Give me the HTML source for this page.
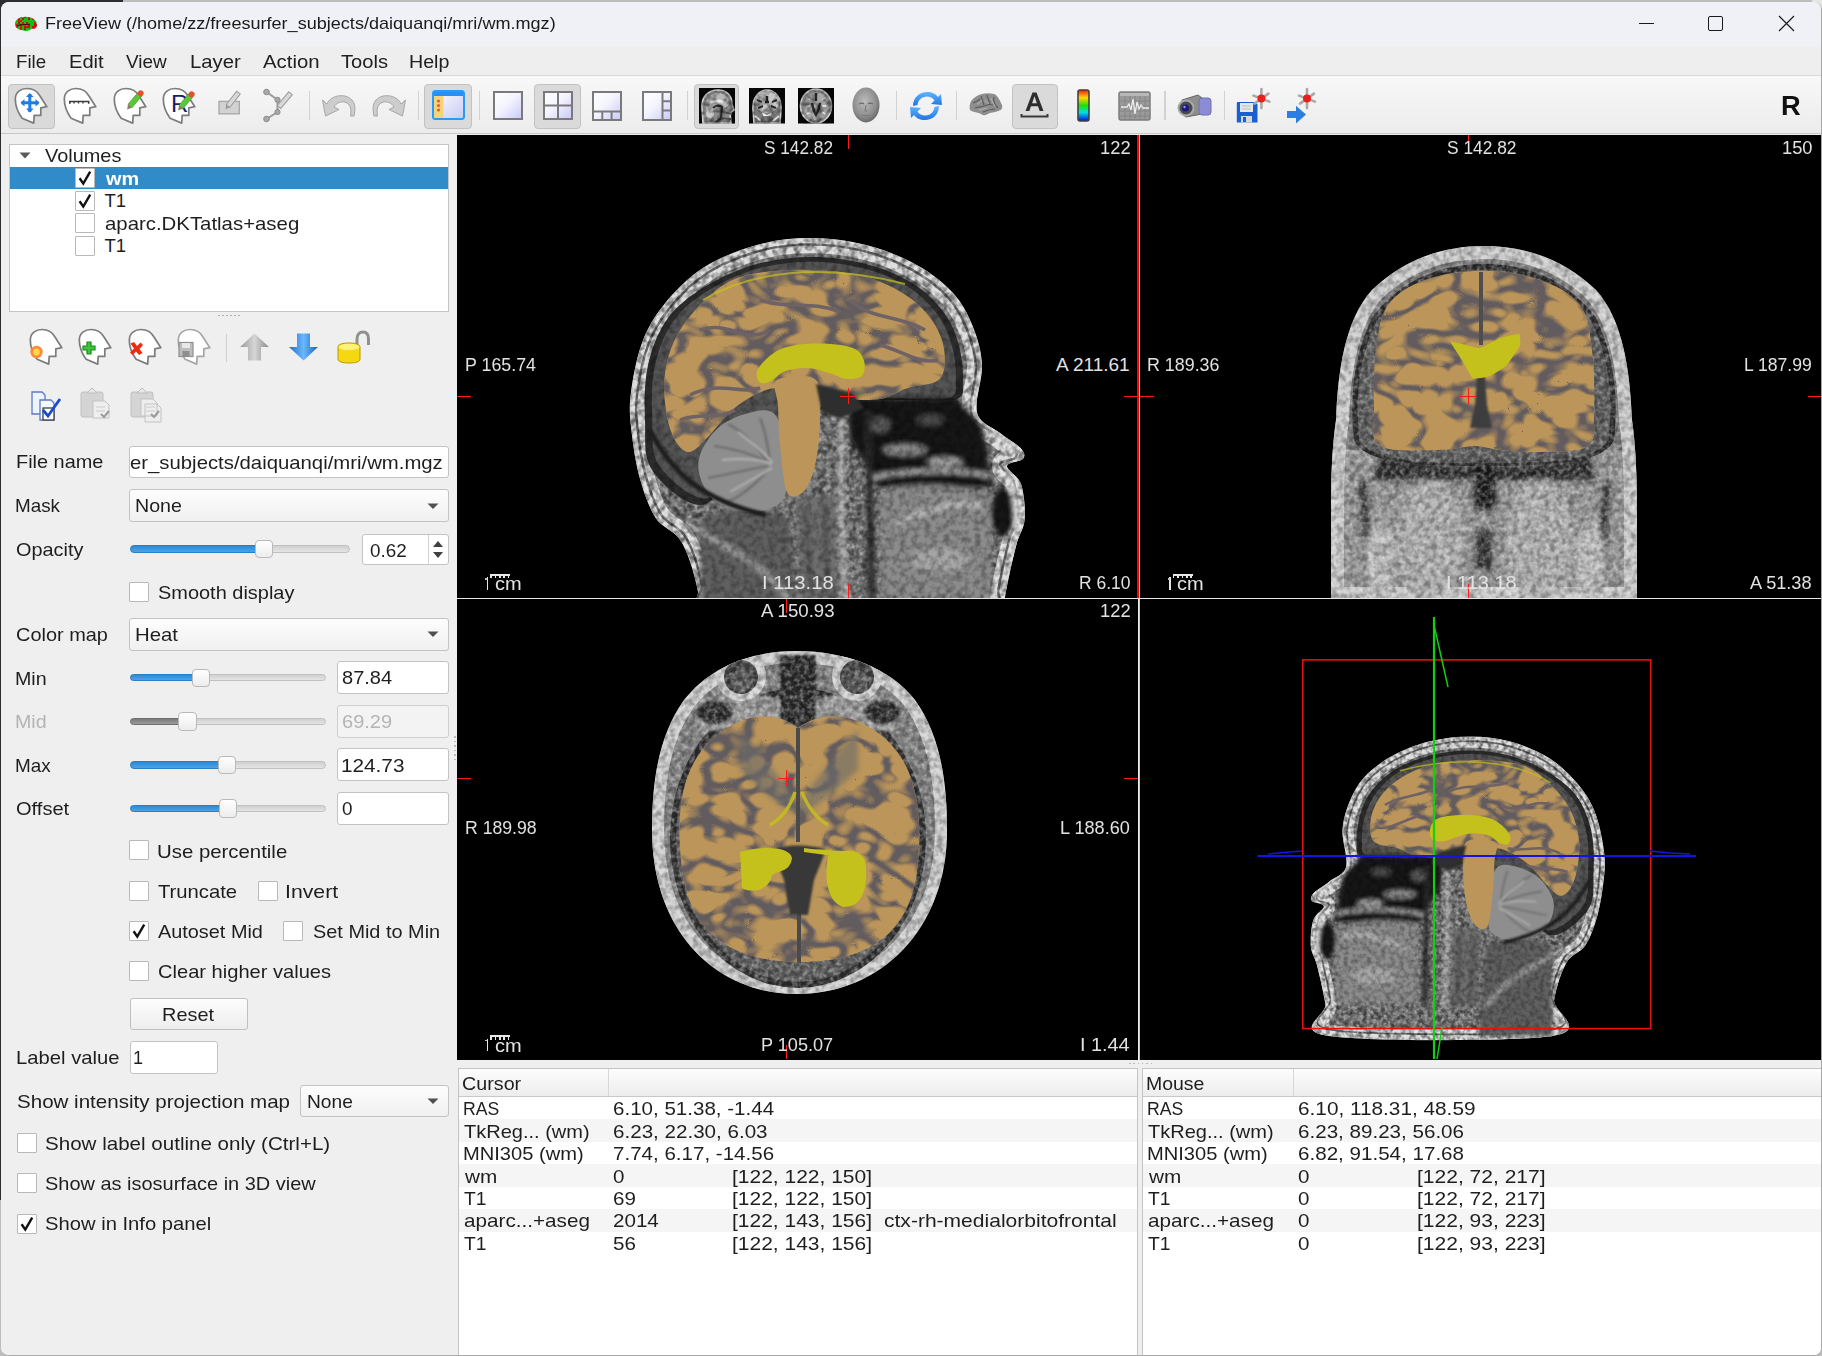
<!DOCTYPE html>
<html><head><meta charset="utf-8"><title>FreeView</title>
<style>
html,body{margin:0;padding:0;}
body{width:1822px;height:1356px;overflow:hidden;position:relative;background:#bdbdbd;font-family:"Liberation Sans",sans-serif;}
.r{position:absolute;box-sizing:border-box;}
.t{position:absolute;white-space:pre;line-height:1;transform-origin:0 0;font-family:"Liberation Sans",sans-serif;}
svg{position:absolute;overflow:visible;}
</style></head><body>
<div class="r" style="left:0px;top:0px;width:123px;height:2px;background:#2b2d31"></div><div class="r" style="left:0px;top:0px;width:2px;height:1200px;background:#2b2d31"></div><div class="r" style="left:0px;top:0px;width:12px;height:12px;background:#2b2d31"></div><div class="r" style="left:1812px;top:0px;width:10px;height:12px;background:#e6e6e6"></div><div class="r" style="left:1px;top:2px;width:1821px;height:1354px;border-radius:8px;background:#efefef;border-right:1px solid #a9a9a9;border-bottom:1px solid #a9a9a9;overflow:hidden"><div style="position:absolute;left:-1px;top:-2px;width:1822px;height:1356px"><div class="r" style="left:0px;top:0px;width:1822px;height:47px;background:#eff1f6"></div><div class="r" style="left:1639px;top:23px;width:15px;height:1px;background:#1a1a1a"></div><div class="r" style="left:1708px;top:16px;width:15px;height:15px;border:1.2px solid #1a1a1a;border-radius:2px"></div><svg style="left:1778px;top:15px" width="17" height="17" viewBox="0 0 17 17"><path d="M1 1 L16 16 M16 1 L1 16" stroke="#1a1a1a" stroke-width="1.2"/></svg><div class="r" style="left:0px;top:47px;width:1822px;height:29px;background:#eeeeee"></div><div class="r" style="left:0px;top:75px;width:1822px;height:1px;background:#d9d9d9"></div><div class="r" style="left:0px;top:76px;width:1822px;height:57px;background:linear-gradient(#f8f8f8,#ececec)"></div><div class="r" style="left:0px;top:133px;width:1822px;height:1px;background:#c8c8c8"></div><div class="r" style="left:7.5px;top:83.6px;width:47.2px;height:45px;background:#dadada;border:1px solid #c2c2c2;border-radius:4px"></div><div class="r" style="left:424.4px;top:83.6px;width:47.200000000000045px;height:45px;background:#dadada;border:1px solid #c2c2c2;border-radius:4px"></div><div class="r" style="left:534.1px;top:83.6px;width:47.10000000000002px;height:45px;background:#dadada;border:1px solid #c2c2c2;border-radius:4px"></div><div class="r" style="left:693.9px;top:83.6px;width:45.200000000000045px;height:45px;background:#dadada;border:1px solid #c2c2c2;border-radius:4px"></div><div class="r" style="left:1011.5px;top:83.6px;width:46.700000000000045px;height:45px;background:#dadada;border:1px solid #c2c2c2;border-radius:4px"></div><div class="r" style="left:309.1px;top:91px;width:1.2px;height:29px;background:#d2d2d2"></div><div class="r" style="left:418.3px;top:91px;width:1.2px;height:29px;background:#d2d2d2"></div><div class="r" style="left:478.8px;top:91px;width:1.2px;height:29px;background:#d2d2d2"></div><div class="r" style="left:687.0px;top:91px;width:1.2px;height:29px;background:#d2d2d2"></div><div class="r" style="left:895.7px;top:91px;width:1.2px;height:29px;background:#d2d2d2"></div><div class="r" style="left:955.7px;top:91px;width:1.2px;height:29px;background:#d2d2d2"></div><div class="r" style="left:1164.4px;top:91px;width:1.2px;height:29px;background:#d2d2d2"></div><div class="r" style="left:1224.1px;top:91px;width:1.2px;height:29px;background:#d2d2d2"></div><div class="r" style="left:0px;top:134px;width:1822px;height:1222px;background:#efefef"></div><div class="r" style="left:9px;top:144px;width:440px;height:168px;background:#fff;border:1px solid #c4c4c4"></div><div class="r" style="left:10px;top:167px;width:438px;height:22px;background:#318bc9"></div><svg style="left:19px;top:152px" width="12" height="7" viewBox="0 0 12 7"><path d="M0.5 0.5 L11.5 0.5 L6 6.5 Z" fill="#5a5a5a"/></svg><div class="r" style="left:75px;top:168.0px;width:20px;height:20px;background:#fff;border:1px solid #b9b9b9;border-radius:1px"></div><svg style="left:75px;top:168.0px" width="20" height="20" viewBox="0 0 20 20"><path d="M4.6 10.2 L8.3 15.6 L15.2 3.6" fill="none" stroke="#111" stroke-width="2.4" stroke-linejoin="miter"/></svg><div class="r" style="left:75px;top:190.6px;width:20px;height:20px;background:#fff;border:1px solid #b9b9b9;border-radius:1px"></div><svg style="left:75px;top:190.6px" width="20" height="20" viewBox="0 0 20 20"><path d="M4.6 10.2 L8.3 15.6 L15.2 3.6" fill="none" stroke="#111" stroke-width="2.4" stroke-linejoin="miter"/></svg><div class="r" style="left:75px;top:213.2px;width:20px;height:20px;background:#fff;border:1px solid #b9b9b9;border-radius:1px"></div><div class="r" style="left:75px;top:235.8px;width:20px;height:20px;background:#fff;border:1px solid #b9b9b9;border-radius:1px"></div><div class="r" style="left:218px;top:314.5px;width:1.5px;height:1.5px;background:#b0b0b0"></div><div class="r" style="left:222px;top:314.5px;width:1.5px;height:1.5px;background:#b0b0b0"></div><div class="r" style="left:226px;top:314.5px;width:1.5px;height:1.5px;background:#b0b0b0"></div><div class="r" style="left:230px;top:314.5px;width:1.5px;height:1.5px;background:#b0b0b0"></div><div class="r" style="left:234px;top:314.5px;width:1.5px;height:1.5px;background:#b0b0b0"></div><div class="r" style="left:238px;top:314.5px;width:1.5px;height:1.5px;background:#b0b0b0"></div><div class="r" style="left:226px;top:334px;width:1px;height:28px;background:#d0d0d0"></div><div class="r" style="left:129px;top:446px;width:320px;height:32px;background:#fff;border:1px solid #c3c3c3;border-radius:3px"></div><div class="r" style="left:129px;top:489px;width:320px;height:33px;background:linear-gradient(#fdfdfd,#f0f0f0);border:1px solid #c3c3c3;border-radius:3px"></div><svg style="left:427px;top:502.5px" width="12" height="7" viewBox="0 0 12 7"><path d="M0.5 0.5 L11.5 0.5 L6 6 Z" fill="#505050"/></svg><div class="r" style="left:130.3px;top:545.4px;width:220.09999999999997px;height:7.4px;background:linear-gradient(#d0d0d0,#e4e4e4);border:1px solid #c0c0c0;border-radius:4px"></div><div class="r" style="left:130.3px;top:545.4px;width:134.05px;height:7.4px;background:linear-gradient(#2f8ad4,#4aa3e6);border:1px solid #2a7fc4;border-radius:4px"></div><div class="r" style="left:255.3px;top:539.8000000000001px;width:18.099999999999966px;height:18.6px;background:linear-gradient(#ffffff,#ececec);border:1px solid #b9b9b9;border-radius:4px"></div><div class="r" style="left:361.6px;top:534.2px;width:87.39999999999998px;height:30.799999999999955px;background:#fff;border:1px solid #c3c3c3;border-radius:3px"></div><div class="r" style="left:427.5px;top:535px;width:1px;height:29.5px;background:#d0d0d0"></div><svg style="left:430px;top:537px" width="16" height="26" viewBox="0 0 16 26"><path d="M3 10 L13 10 L8 4 Z M3 15 L13 15 L8 21 Z" fill="#404040"/></svg><div class="r" style="left:129px;top:582px;width:20px;height:20px;background:#fff;border:1px solid #b9b9b9;border-radius:1px"></div><div class="r" style="left:129px;top:617.6px;width:320px;height:33.60000000000002px;background:linear-gradient(#fdfdfd,#f0f0f0);border:1px solid #c3c3c3;border-radius:3px"></div><svg style="left:427px;top:631.4000000000001px" width="12" height="7" viewBox="0 0 12 7"><path d="M0.5 0.5 L11.5 0.5 L6 6 Z" fill="#505050"/></svg><div class="r" style="left:130.3px;top:674.0999999999999px;width:195.89999999999998px;height:7.4px;background:linear-gradient(#d0d0d0,#e4e4e4);border:1px solid #c0c0c0;border-radius:4px"></div><div class="r" style="left:130.3px;top:674.0999999999999px;width:70.85px;height:7.4px;background:linear-gradient(#2f8ad4,#4aa3e6);border:1px solid #2a7fc4;border-radius:4px"></div><div class="r" style="left:191.8px;top:668.5px;width:18.69999999999999px;height:18.6px;background:linear-gradient(#ffffff,#ececec);border:1px solid #b9b9b9;border-radius:4px"></div><div class="r" style="left:337.4px;top:661.4px;width:111.60000000000002px;height:32.60000000000002px;background:#fff;border:1px solid #c3c3c3;border-radius:3px"></div><div class="r" style="left:130.3px;top:717.8px;width:195.89999999999998px;height:7.4px;background:linear-gradient(#d0d0d0,#e4e4e4);border:1px solid #c0c0c0;border-radius:4px"></div><div class="r" style="left:130.3px;top:717.8px;width:57.19999999999999px;height:7.4px;background:linear-gradient(#7b7b7b,#9a9a9a);border:1px solid #6e6e6e;border-radius:4px"></div><div class="r" style="left:178px;top:712.2px;width:19px;height:18.6px;background:linear-gradient(#ffffff,#ececec);border:1px solid #b9b9b9;border-radius:4px"></div><div class="r" style="left:337.4px;top:705px;width:111.60000000000002px;height:32.89999999999998px;background:#f3f3f3;border:1px solid #cfcfcf;border-radius:3px"></div><div class="r" style="left:130.3px;top:761.3px;width:195.89999999999998px;height:7.4px;background:linear-gradient(#d0d0d0,#e4e4e4);border:1px solid #c0c0c0;border-radius:4px"></div><div class="r" style="left:130.3px;top:761.3px;width:96.59999999999997px;height:7.4px;background:linear-gradient(#2f8ad4,#4aa3e6);border:1px solid #2a7fc4;border-radius:4px"></div><div class="r" style="left:217.7px;top:755.7px;width:18.400000000000006px;height:18.6px;background:linear-gradient(#ffffff,#ececec);border:1px solid #b9b9b9;border-radius:4px"></div><div class="r" style="left:337.4px;top:748px;width:111.60000000000002px;height:33.299999999999955px;background:#fff;border:1px solid #c3c3c3;border-radius:3px"></div><div class="r" style="left:130.3px;top:804.9px;width:195.89999999999998px;height:7.4px;background:linear-gradient(#d0d0d0,#e4e4e4);border:1px solid #c0c0c0;border-radius:4px"></div><div class="r" style="left:130.3px;top:804.9px;width:97.89999999999998px;height:7.4px;background:linear-gradient(#2f8ad4,#4aa3e6);border:1px solid #2a7fc4;border-radius:4px"></div><div class="r" style="left:219px;top:799.3000000000001px;width:18.400000000000006px;height:18.6px;background:linear-gradient(#ffffff,#ececec);border:1px solid #b9b9b9;border-radius:4px"></div><div class="r" style="left:337.4px;top:792.2px;width:111.60000000000002px;height:32.799999999999955px;background:#fff;border:1px solid #c3c3c3;border-radius:3px"></div><div class="r" style="left:129px;top:840px;width:20px;height:20px;background:#fff;border:1px solid #b9b9b9;border-radius:1px"></div><div class="r" style="left:129px;top:880.5px;width:20px;height:20px;background:#fff;border:1px solid #b9b9b9;border-radius:1px"></div><div class="r" style="left:258px;top:880.5px;width:20px;height:20px;background:#fff;border:1px solid #b9b9b9;border-radius:1px"></div><div class="r" style="left:129px;top:921px;width:20px;height:20px;background:#fff;border:1px solid #b9b9b9;border-radius:1px"></div><svg style="left:129px;top:921px" width="20" height="20" viewBox="0 0 20 20"><path d="M4.6 10.2 L8.3 15.6 L15.2 3.6" fill="none" stroke="#111" stroke-width="2.4" stroke-linejoin="miter"/></svg><div class="r" style="left:283.3px;top:921px;width:20px;height:20px;background:#fff;border:1px solid #b9b9b9;border-radius:1px"></div><div class="r" style="left:129px;top:961.4px;width:20px;height:20px;background:#fff;border:1px solid #b9b9b9;border-radius:1px"></div><div class="r" style="left:129.6px;top:997.6px;width:118.2px;height:32.9px;background:linear-gradient(#fdfdfd,#eeeeee);border:1px solid #c0c0c0;border-radius:3px"></div><div class="r" style="left:129.6px;top:1040.8px;width:88.0px;height:33.40000000000009px;background:#fff;border:1px solid #c3c3c3;border-radius:3px"></div><div class="r" style="left:300.2px;top:1084.5px;width:148.5px;height:32.90000000000009px;background:linear-gradient(#fdfdfd,#f0f0f0);border:1px solid #c3c3c3;border-radius:3px"></div><svg style="left:426.7px;top:1097.95px" width="12" height="7" viewBox="0 0 12 7"><path d="M0.5 0.5 L11.5 0.5 L6 6 Z" fill="#505050"/></svg><div class="r" style="left:16.7px;top:1132.5px;width:20px;height:20px;background:#fff;border:1px solid #b9b9b9;border-radius:1px"></div><div class="r" style="left:16.7px;top:1173px;width:20px;height:20px;background:#fff;border:1px solid #b9b9b9;border-radius:1px"></div><div class="r" style="left:16.7px;top:1213.5px;width:20px;height:20px;background:#fff;border:1px solid #b9b9b9;border-radius:1px"></div><svg style="left:16.7px;top:1213.5px" width="20" height="20" viewBox="0 0 20 20"><path d="M4.6 10.2 L8.3 15.6 L15.2 3.6" fill="none" stroke="#111" stroke-width="2.4" stroke-linejoin="miter"/></svg><div class="r" style="left:457.5px;top:1067.5px;width:680.5px;height:300px;background:#fff;border:1px solid #c4c4c4"></div><div class="r" style="left:458.5px;top:1068.5px;width:678.5px;height:28px;background:linear-gradient(#fdfdfd,#ececec)"></div><div class="r" style="left:458.5px;top:1096px;width:678.5px;height:1px;background:#c8c8c8"></div><div class="r" style="left:607.5px;top:1069px;width:1px;height:27px;background:#d8d8d8"></div><div class="r" style="left:458.5px;top:1119.45px;width:678.5px;height:22.45px;background:#f5f5f5"></div><div class="r" style="left:458.5px;top:1164.35px;width:678.5px;height:22.45px;background:#f5f5f5"></div><div class="r" style="left:458.5px;top:1209.25px;width:678.5px;height:22.45px;background:#f5f5f5"></div><div class="r" style="left:1142px;top:1067.5px;width:680px;height:300px;background:#fff;border:1px solid #c4c4c4"></div><div class="r" style="left:1143px;top:1068.5px;width:678px;height:28px;background:linear-gradient(#fdfdfd,#ececec)"></div><div class="r" style="left:1143px;top:1096px;width:678px;height:1px;background:#c8c8c8"></div><div class="r" style="left:1292.6px;top:1069px;width:1px;height:27px;background:#d8d8d8"></div><div class="r" style="left:1143px;top:1119.45px;width:678px;height:22.45px;background:#f5f5f5"></div><div class="r" style="left:1143px;top:1164.35px;width:678px;height:22.45px;background:#f5f5f5"></div><div class="r" style="left:1143px;top:1209.25px;width:678px;height:22.45px;background:#f5f5f5"></div><div class="r" style="left:1129.0px;top:1062.5px;width:1.5px;height:1.5px;background:#b8b8b8"></div><div class="r" style="left:1133.3px;top:1062.5px;width:1.5px;height:1.5px;background:#b8b8b8"></div><div class="r" style="left:1137.6px;top:1062.5px;width:1.5px;height:1.5px;background:#b8b8b8"></div><div class="r" style="left:1141.9px;top:1062.5px;width:1.5px;height:1.5px;background:#b8b8b8"></div><div class="r" style="left:1146.2px;top:1062.5px;width:1.5px;height:1.5px;background:#b8b8b8"></div><div class="r" style="left:1150.5px;top:1062.5px;width:1.5px;height:1.5px;background:#b8b8b8"></div><div class="r" style="left:454px;top:736.0px;width:1.5px;height:1.5px;background:#b8b8b8"></div><div class="r" style="left:454px;top:740.5px;width:1.5px;height:1.5px;background:#b8b8b8"></div><div class="r" style="left:454px;top:745.0px;width:1.5px;height:1.5px;background:#b8b8b8"></div><div class="r" style="left:454px;top:749.5px;width:1.5px;height:1.5px;background:#b8b8b8"></div><div class="r" style="left:454px;top:754.0px;width:1.5px;height:1.5px;background:#b8b8b8"></div><div class="r" style="left:454px;top:758.5px;width:1.5px;height:1.5px;background:#b8b8b8"></div><svg style="left:14.9px;top:87.5px" width="34" height="37" viewBox="0 0 34 37"><path d="M7.1,30.2 C4,26 0.3,18 0.3,11 C0.3,4 6,0.5 12,0.5 C18,0.5 22,2.5 25,8 L31.8,18.7 L25.8,19.8 L25.8,27.4 L19.2,27.4 L18.7,35.1 Z" fill="#fff" stroke="#7c7c7c" stroke-width="1.7" stroke-linejoin="round"/><g fill="#1e7ce6"><rect x="6.5" y="13.3" width="17" height="3"/><rect x="13.3" y="6" width="3" height="18"/><path d="M5.5,14.8 L9.5,11 L9.5,18.6 Z M24.5,14.8 L20.5,11 L20.5,18.6 Z M14.8,5 L11,9 L18.6,9 Z M14.8,24.6 L11,20.6 L18.6,20.6 Z"/></g></svg><svg style="left:64.3px;top:87.5px" width="34" height="37" viewBox="0 0 34 37"><path d="M7.1,30.2 C4,26 0.3,18 0.3,11 C0.3,4 6,0.5 12,0.5 C18,0.5 22,2.5 25,8 L31.8,18.7 L25.8,19.8 L25.8,27.4 L19.2,27.4 L18.7,35.1 Z" fill="#fff" stroke="#7c7c7c" stroke-width="1.7" stroke-linejoin="round"/><path d="M5.8,15.8 L5.8,13.5 L24.7,13.5 L24.7,15.8" fill="none" stroke="#3c3c3c" stroke-width="1.6"/><path d="M10,13.5 V15.5 M14.5,13.5 V15.5 M19,13.5 V15.5" stroke="#3c3c3c" stroke-width="1.4"/></svg><svg style="left:113.8px;top:87.5px" width="34" height="37" viewBox="0 0 34 37"><path d="M7.1,30.2 C4,26 0.3,18 0.3,11 C0.3,4 6,0.5 12,0.5 C18,0.5 22,2.5 25,8 L31.8,18.7 L25.8,19.8 L25.8,27.4 L19.2,27.4 L18.7,35.1 Z" fill="#fff" stroke="#7c7c7c" stroke-width="1.7" stroke-linejoin="round"/><g transform="translate(16,18) rotate(-50)"><rect x="0" y="-2.6" width="15" height="5.2" fill="#5cc63a" stroke="#3f9a25" stroke-width="0.6"/><path d="M0,-2.6 L-4.5,0 L0,2.6 Z" fill="#8a7d6a"/><circle cx="16.5" cy="0" r="3" fill="#e5502a"/></g></svg><svg style="left:163.2px;top:87.5px" width="34" height="37" viewBox="0 0 34 37"><path d="M7.1,30.2 C4,26 0.3,18 0.3,11 C0.3,4 6,0.5 12,0.5 C18,0.5 22,2.5 25,8 L31.8,18.7 L25.8,19.8 L25.8,27.4 L19.2,27.4 L18.7,35.1 Z" fill="#fff" stroke="#7c7c7c" stroke-width="1.7" stroke-linejoin="round"/><text x="8" y="23.6" font-family="Liberation Sans" font-size="24" fill="#1b1b6e">R</text><g transform="translate(18,19) rotate(-50)"><rect x="0" y="-2.6" width="15" height="5.2" fill="#5cc63a" stroke="#3f9a25" stroke-width="0.6"/><path d="M0,-2.6 L-4.5,0 L0,2.6 Z" fill="#8a7d6a"/><circle cx="16.5" cy="0" r="3" fill="#e5502a"/></g></svg><svg style="left:217px;top:86px" width="28" height="30" viewBox="0 0 28 30"><rect x="2" y="15.4" width="20.3" height="12.4" fill="#d2d2d2" stroke="#aaaaaa" stroke-width="1.4"/><g transform="translate(11,20) rotate(-52)"><rect x="0" y="-2.3" width="17" height="4.6" fill="#d8d8d8" stroke="#9c9c9c" stroke-width="1"/><path d="M0,-2.3 L-4,0 L0,2.3 Z" fill="#9c9c9c"/></g></svg><svg style="left:262px;top:86px" width="36" height="38" viewBox="0 0 36 38"><path d="M4.5,6 L15.5,13.8 L15.5,26 L4.5,33" fill="none" stroke="#9a9a9a" stroke-width="2"/><g fill="#a8a8a8" stroke="#8c8c8c" stroke-width="1"><circle cx="4.5" cy="6" r="2.8"/><circle cx="15.5" cy="13.8" r="2.6"/><circle cx="15.5" cy="26" r="2.6"/><circle cx="4.5" cy="33" r="2.8"/></g><g transform="translate(17,21) rotate(-50)"><rect x="0" y="-2.3" width="18" height="4.6" fill="#d8d8d8" stroke="#9c9c9c" stroke-width="1"/></g></svg><svg style="left:322.3px;top:92.3px" width="34" height="27" viewBox="0 0 34 27"><path d="M5,12 C8,4 22,0 30,8 C34,12 33,19 32,24 L28.5,24 C29.5,19 29,13 25,11 C20,8 14,11 12,15 L17,17.5 L3.5,24 L0.5,8 Z" fill="#cdcdcd" stroke="#a6a6a6" stroke-width="1"/></svg><svg style="left:371.9px;top:92.3px" width="34" height="27" viewBox="0 0 34 27"><g transform="translate(34,0) scale(-1,1)"><path d="M5,12 C8,4 22,0 30,8 C34,12 33,19 32,24 L28.5,24 C29.5,19 29,13 25,11 C20,8 14,11 12,15 L17,17.5 L3.5,24 L0.5,8 Z" fill="#cdcdcd" stroke="#a6a6a6" stroke-width="1"/></g></svg><svg style="left:431.9px;top:90.4px" width="33" height="30" viewBox="0 0 33 30"><defs><linearGradient id="lv" x1="0" y1="0" x2="1" y2="1"><stop offset="0" stop-color="#ffffff"/><stop offset="1" stop-color="#c9c9f5"/></linearGradient></defs><rect x="1" y="1" width="31" height="28" rx="2.5" fill="url(#lv)" stroke="#2a9bf5" stroke-width="2"/><rect x="2" y="2" width="29" height="4" fill="#2a8ff0"/><rect x="2" y="6" width="9.5" height="22" fill="#f4d47a"/><g fill="#ef5a2a"><circle cx="6.5" cy="11" r="1.6"/><circle cx="6.5" cy="15.5" r="1.6"/><circle cx="6.5" cy="20" r="1.6"/></g></svg><svg style="left:493.4px;top:90.5px" width="30" height="29" viewBox="0 0 30 29"><defs><linearGradient id="lg1" x1="0" y1="0" x2="1" y2="1"><stop offset="0" stop-color="#ffffff"/><stop offset="0.45" stop-color="#f4f4ff"/><stop offset="1" stop-color="#c8c8f8"/></linearGradient></defs><rect x="1" y="1" width="28" height="27" fill="url(#lg1)" stroke="#7a7a7a" stroke-width="2"/></svg><svg style="left:543px;top:90.5px" width="30" height="29" viewBox="0 0 30 29"><defs><linearGradient id="lg2" x1="0" y1="0" x2="1" y2="1"><stop offset="0" stop-color="#ffffff"/><stop offset="0.45" stop-color="#f4f4ff"/><stop offset="1" stop-color="#c8c8f8"/></linearGradient></defs><rect x="1" y="1" width="28" height="27" fill="url(#lg2)" stroke="#7a7a7a" stroke-width="2"/><path d="M15,1 V28 M1,14.5 H29" stroke="#7a7a7a" stroke-width="2"/></svg><svg style="left:592.2px;top:90.5px" width="30" height="30" viewBox="0 0 30 30"><defs><linearGradient id="lg3" x1="0" y1="0" x2="1" y2="1"><stop offset="0" stop-color="#ffffff"/><stop offset="0.45" stop-color="#f4f4ff"/><stop offset="1" stop-color="#c8c8f8"/></linearGradient></defs><rect x="1" y="1" width="28" height="28" fill="url(#lg3)" stroke="#7a7a7a" stroke-width="2"/><path d="M1,20.5 H29 M10.3,20.5 V29 M19.6,20.5 V29" stroke="#7a7a7a" stroke-width="2"/></svg><svg style="left:642px;top:90.5px" width="30" height="30" viewBox="0 0 30 30"><defs><linearGradient id="lg4" x1="0" y1="0" x2="1" y2="1"><stop offset="0" stop-color="#ffffff"/><stop offset="0.45" stop-color="#f4f4ff"/><stop offset="1" stop-color="#c8c8f8"/></linearGradient></defs><rect x="1" y="1" width="28" height="28" fill="url(#lg4)" stroke="#7a7a7a" stroke-width="2"/><path d="M20.5,1 V29 M20.5,10.3 H29 M20.5,19.6 H29" stroke="#7a7a7a" stroke-width="2"/></svg><svg style="left:699px;top:87.5px" width="36" height="35.5" viewBox="0 0 36 35.5"><rect x="0" y="0" width="36" height="35.5" fill="#080808"/><path d="M4,35 L3,20 C2,9 9,2 19,2 C28,2 33,8 33,16 L35,22 L31,25 L32,35 Z" fill="#8a8a8a" stroke="#d8d8d8" stroke-width="1.6"/><path d="M6,18 C6,10 12,5 19,5 C26,5 30,10 30,17 L22,22 L8,24 Z" fill="#b8b8b8"/><path d="M10,16 C14,12 20,12 24,15" stroke="#f0f0f0" stroke-width="3" fill="none"/><path d="M14,20 C17,17 21,17 23,19 L22,30 L17,34" stroke="#333" stroke-width="2.2" fill="none"/><path d="M24,24 L33,26 M22,30 L32,31" stroke="#555" stroke-width="2"/><circle cx="11" cy="26" r="4" fill="#c8c8c8"/><rect x="0" y="0" width="36" height="35.5" fill="#000" filter="url(#texd)" opacity="0.5"/></svg><svg style="left:748.5px;top:87.5px" width="36" height="35.5" viewBox="0 0 36 35.5"><rect x="0" y="0" width="36" height="35.5" fill="#080808"/><path d="M5,35 L4,22 C3,10 10,2 18,2 C26,2 33,10 32,22 L31,35 Z" fill="#7a7a7a" stroke="#d0d0d0" stroke-width="1.6"/><ellipse cx="18" cy="14" rx="12" ry="11" fill="#c8c8c8"/><path d="M8,12 L13,14 M28,12 L23,14 M9,20 L14,18 M27,20 L22,18" stroke="#333" stroke-width="2"/><path d="M18,8 L18,13 M16,14 L20,14" stroke="#222" stroke-width="2.5"/><path d="M13,24 L18,27 L23,24 L22,28 L14,28 Z" fill="#eaeaea"/><path d="M6,28 L12,33 M30,28 L24,33" stroke="#dadada" stroke-width="2"/><rect x="0" y="0" width="36" height="35.5" fill="#000" filter="url(#texd)" opacity="0.5"/></svg><svg style="left:797.6px;top:87.5px" width="36" height="35.5" viewBox="0 0 36 35.5"><rect x="0" y="0" width="36" height="35.5" fill="#080808"/><ellipse cx="18" cy="18" rx="15.5" ry="17" fill="#8c8c8c" stroke="#d4d4d4" stroke-width="1.6"/><ellipse cx="18" cy="18" rx="12" ry="14" fill="#a8a8a8"/><path d="M18,5 L18,13 M14,15 C15,20 16,24 18,27 C20,24 21,20 22,15" stroke="#2a2a2a" stroke-width="2.4" fill="none"/><path d="M9,10 L12,12 M27,10 L24,12 M8,18 L12,18 M28,18 L24,18 M9,26 L12,24 M27,26 L24,24" stroke="#dedede" stroke-width="2"/><rect x="0" y="0" width="36" height="35.5" fill="#000" filter="url(#texd)" opacity="0.5"/></svg><svg style="left:851.7px;top:87.4px" width="28" height="36" viewBox="0 0 28 36"><defs><radialGradient id="hd" cx="0.45" cy="0.4" r="0.6"><stop offset="0" stop-color="#bdbdbd"/><stop offset="0.7" stop-color="#8e8e8e"/><stop offset="1" stop-color="#6a6a6a"/></radialGradient></defs><ellipse cx="14" cy="18" rx="13.5" ry="17.5" fill="url(#hd)"/><path d="M7,17 C9,16 11,16 12,17 M16,17 C17,16 19,16 21,17" stroke="#6a6a6a" stroke-width="1.2" fill="none"/><path d="M14,18 L13,24 L15,24 M10,28 C12,29 16,29 18,28" stroke="#777" stroke-width="1" fill="none"/></svg><svg style="left:908.8px;top:88.9px" width="34" height="34" viewBox="0 0 34 34"><defs><linearGradient id="rb" x1="0" y1="0" x2="0" y2="1"><stop offset="0" stop-color="#5fb6ff"/><stop offset="1" stop-color="#1f74e0"/></linearGradient></defs><path d="M4,17 C4,8 11,3 18,3 C23,3 27,5 29,8 L32,5 L33,16 L22,15 L25.5,11.5 C24,9 21,7.5 18,7.5 C13,7.5 9,11 8.5,16 Z" fill="url(#rb)"/><path d="M30,17 C30,26 23,31 16,31 C11,31 7,29 5,26 L2,29 L1,18 L12,19 L8.5,22.5 C10,25 13,26.5 16,26.5 C21,26.5 25,23 25.5,18 Z" fill="url(#rb)"/></svg><svg style="left:968.5px;top:93.3px" width="34" height="24" viewBox="0 0 34 24"><path d="M0.6,15.5 C0.5,11 1.5,8.5 3,7 C5,4.5 8,2.5 12,1.2 C16,0 21,0 25.1,0.9 C28,2 30.5,6 33,11.9 C33.5,14 33.3,16 31.5,17 C29,18.5 24,19.5 20.9,20 C18.5,21 16.5,22.5 15,22.3 C13,22 12,20.6 10.5,20.2 C8,19.6 5,19 2.5,18 C1.3,17.4 0.7,16.5 0.6,15.5 Z" fill="#8e8e8e"/><g fill="none" stroke="#5c5c5c" stroke-width="1.2"><path d="M6,15 C10,13.5 14,14 18,12 C20,11 22,11.5 24,12"/><path d="M12,3 C13,6 14,9 15,12"/><path d="M18,2 C19,6 21,9 21,12"/><path d="M25,4 C24,8 26,12 29,15"/><path d="M4,10 C7,9 9,8 11,6"/><path d="M14,19 C17,17.5 21,16.5 26,16"/></g><g fill="none" stroke="#b4b4b4" stroke-width="1"><path d="M8,11 C10,10 12,9 13,7"/><path d="M16,7 C17,9 18,10 20,10"/><path d="M22,5 C23,8 24,10 26,13"/><path d="M10,17 C13,16 16,16 18,15"/></g></svg><svg style="left:1020px;top:91px" width="31" height="28" viewBox="0 0 31 28"><path d="M5.5,20 L12.5,1.5 L16.5,1.5 L23.5,20 L19.7,20 L18,15.3 L11,15.3 L9.3,20 Z M12.1,12.2 L16.9,12.2 L14.5,5.2 Z" fill="#2e2e2e"/><path d="M1.5,23 L1.5,25.5 L27.5,25.5 L27.5,23" fill="none" stroke="#3a3a3a" stroke-width="2"/></svg><svg style="left:1077.1px;top:89.2px" width="13" height="33" viewBox="0 0 13 33"><defs><linearGradient id="cb" x1="0" y1="0" x2="0" y2="1"><stop offset="0" stop-color="#ff1a00"/><stop offset="0.25" stop-color="#ffd800"/><stop offset="0.5" stop-color="#20e000"/><stop offset="0.72" stop-color="#00e0e0"/><stop offset="1" stop-color="#0010e8"/></linearGradient></defs><rect x="1" y="1" width="11" height="31" rx="2" fill="url(#cb)" stroke="#404040" stroke-width="1.6"/></svg><svg style="left:1117.5px;top:90.7px" width="33" height="30" viewBox="0 0 33 30"><rect x="1" y="1" width="31" height="28" rx="2" fill="#9a9a9a" stroke="#7c7c7c" stroke-width="1.5"/><rect x="2" y="2" width="29" height="3" fill="#b8b8b8"/><path d="M2,10 H31 M2,15 H31 M2,20 H31 M2,25 H31 M7,5 V29 M12,5 V29 M17,5 V29 M22,5 V29 M27,5 V29" stroke="#858585" stroke-width="0.9"/><path d="M3,16 H9 L11,13 L13,19 L15,8 L17,23 L19,11 L21,18 L23,14 L25,17 H31" stroke="#eeeeee" stroke-width="1.3" fill="none"/></svg><svg style="left:1177.5px;top:90px" width="34" height="28" viewBox="0 0 34 28"><path d="M4,10 L20,5 L24,8 L24,24 L8,27 L4,24 Z" fill="#8e8e8e" stroke="#666" stroke-width="1"/><rect x="21" y="8" width="12" height="17" rx="3" fill="#8c8cd6" stroke="#6e6eb0" stroke-width="1"/><circle cx="8" cy="18" r="7.5" fill="#4a4a4a" stroke="#aaaaaa" stroke-width="2"/><circle cx="7.5" cy="18" r="3.5" fill="#1a1a7a"/><circle cx="6.5" cy="17" r="1.2" fill="#9090ff"/></svg><svg style="left:1236px;top:88px" width="36" height="36" viewBox="0 0 36 36"><path d="M0.8,15 Q0.8,14 2,14 L19,14 L21.5,16.5 L21.5,34.5 L0.8,34.5 Z" fill="#1a5fd0"/><rect x="4" y="15" width="13" height="9" fill="#e6e6e6"/><path d="M6,18 H15 M6,21 H15" stroke="#bdbdbd" stroke-width="1"/><rect x="5" y="28" width="11" height="6.5" fill="#d8d8d8"/><rect x="7" y="29" width="3" height="5" fill="#1a5fd0"/><g transform="translate(25.4,10.6)"><g stroke="#a8a8a8" stroke-width="2.6" stroke-linecap="round"><path d="M0,-9.5 V9.5 M-8,-3 L8,3 M-7,5 L7,-5" /></g><circle cx="0" cy="0" r="4" fill="#e8201a"/></g></svg><svg style="left:1287px;top:88px" width="36" height="36" viewBox="0 0 36 36"><path d="M0,23 L9,23 L9,17.7 L19,26.5 L9,35.5 L9,30 L0,30 Z" fill="#2a7fe0"/><g transform="translate(20,10.6)"><g stroke="#a8a8a8" stroke-width="2.6" stroke-linecap="round"><path d="M0,-9.5 V9.5 M-8,-3 L8,3 M-7,5 L7,-5" /></g><circle cx="0" cy="0" r="4" fill="#e8201a"/></g></svg><svg style="left:13.5px;top:15.5px" width="24" height="16" viewBox="0 0 24 16"><defs><clipPath id="brc"><path d="M1,9 C0.5,4 5,0.8 11.5,0.8 C18,0.8 23,4 23,9 C23,12 20.5,13.2 17.5,12.8 C15,15.5 10.5,15.5 8.5,14.2 C4.5,13.8 1.5,12 1,9 Z"/></clipPath></defs><g clip-path="url(#brc)"><rect x="0" y="0" width="2" height="2" fill="#10c010"/><rect x="2" y="0" width="2" height="2" fill="#10c010"/><rect x="4" y="0" width="2" height="2" fill="#e01010"/><rect x="6" y="0" width="2" height="2" fill="#c01010"/><rect x="8" y="0" width="2" height="2" fill="#10c010"/><rect x="10" y="0" width="2" height="2" fill="#e01010"/><rect x="12" y="0" width="2" height="2" fill="#10c010"/><rect x="14" y="0" width="2" height="2" fill="#e01010"/><rect x="16" y="0" width="2" height="2" fill="#10c010"/><rect x="18" y="0" width="2" height="2" fill="#c01010"/><rect x="20" y="0" width="2" height="2" fill="#10c010"/><rect x="22" y="0" width="2" height="2" fill="#c01010"/><rect x="0" y="2" width="2" height="2" fill="#e01010"/><rect x="2" y="2" width="2" height="2" fill="#10c010"/><rect x="4" y="2" width="2" height="2" fill="#e01010"/><rect x="6" y="2" width="2" height="2" fill="#10c010"/><rect x="8" y="2" width="2" height="2" fill="#c01010"/><rect x="10" y="2" width="2" height="2" fill="#10c010"/><rect x="12" y="2" width="2" height="2" fill="#10c010"/><rect x="14" y="2" width="2" height="2" fill="#c01010"/><rect x="16" y="2" width="2" height="2" fill="#10c010"/><rect x="18" y="2" width="2" height="2" fill="#e01010"/><rect x="20" y="2" width="2" height="2" fill="#10c010"/><rect x="22" y="2" width="2" height="2" fill="#c01010"/><rect x="0" y="4" width="2" height="2" fill="#10c010"/><rect x="2" y="4" width="2" height="2" fill="#10c010"/><rect x="4" y="4" width="2" height="2" fill="#e01010"/><rect x="6" y="4" width="2" height="2" fill="#e01010"/><rect x="8" y="4" width="2" height="2" fill="#10c010"/><rect x="10" y="4" width="2" height="2" fill="#10c010"/><rect x="12" y="4" width="2" height="2" fill="#10c010"/><rect x="14" y="4" width="2" height="2" fill="#10c010"/><rect x="16" y="4" width="2" height="2" fill="#10c010"/><rect x="18" y="4" width="2" height="2" fill="#10c010"/><rect x="20" y="4" width="2" height="2" fill="#10c010"/><rect x="22" y="4" width="2" height="2" fill="#10c010"/><rect x="0" y="6" width="2" height="2" fill="#10c010"/><rect x="2" y="6" width="2" height="2" fill="#10c010"/><rect x="4" y="6" width="2" height="2" fill="#c01010"/><rect x="6" y="6" width="2" height="2" fill="#10c010"/><rect x="8" y="6" width="2" height="2" fill="#e01010"/><rect x="10" y="6" width="2" height="2" fill="#10c010"/><rect x="12" y="6" width="2" height="2" fill="#c01010"/><rect x="14" y="6" width="2" height="2" fill="#10c010"/><rect x="16" y="6" width="2" height="2" fill="#10c010"/><rect x="18" y="6" width="2" height="2" fill="#10c010"/><rect x="20" y="6" width="2" height="2" fill="#e01010"/><rect x="22" y="6" width="2" height="2" fill="#10c010"/><rect x="0" y="8" width="2" height="2" fill="#10c010"/><rect x="2" y="8" width="2" height="2" fill="#e01010"/><rect x="4" y="8" width="2" height="2" fill="#10c010"/><rect x="6" y="8" width="2" height="2" fill="#e01010"/><rect x="8" y="8" width="2" height="2" fill="#10c010"/><rect x="10" y="8" width="2" height="2" fill="#10c010"/><rect x="12" y="8" width="2" height="2" fill="#10c010"/><rect x="14" y="8" width="2" height="2" fill="#c01010"/><rect x="16" y="8" width="2" height="2" fill="#10c010"/><rect x="18" y="8" width="2" height="2" fill="#10c010"/><rect x="20" y="8" width="2" height="2" fill="#c01010"/><rect x="22" y="8" width="2" height="2" fill="#c01010"/><rect x="0" y="10" width="2" height="2" fill="#10c010"/><rect x="2" y="10" width="2" height="2" fill="#e01010"/><rect x="4" y="10" width="2" height="2" fill="#10c010"/><rect x="6" y="10" width="2" height="2" fill="#e01010"/><rect x="8" y="10" width="2" height="2" fill="#10c010"/><rect x="10" y="10" width="2" height="2" fill="#c01010"/><rect x="12" y="10" width="2" height="2" fill="#e01010"/><rect x="14" y="10" width="2" height="2" fill="#c01010"/><rect x="16" y="10" width="2" height="2" fill="#10c010"/><rect x="18" y="10" width="2" height="2" fill="#c01010"/><rect x="20" y="10" width="2" height="2" fill="#e01010"/><rect x="22" y="10" width="2" height="2" fill="#c01010"/><rect x="0" y="12" width="2" height="2" fill="#e01010"/><rect x="2" y="12" width="2" height="2" fill="#10c010"/><rect x="4" y="12" width="2" height="2" fill="#10c010"/><rect x="6" y="12" width="2" height="2" fill="#e01010"/><rect x="8" y="12" width="2" height="2" fill="#10c010"/><rect x="10" y="12" width="2" height="2" fill="#c01010"/><rect x="12" y="12" width="2" height="2" fill="#10c010"/><rect x="14" y="12" width="2" height="2" fill="#10c010"/><rect x="16" y="12" width="2" height="2" fill="#10c010"/><rect x="18" y="12" width="2" height="2" fill="#c01010"/><rect x="20" y="12" width="2" height="2" fill="#e01010"/><rect x="22" y="12" width="2" height="2" fill="#10c010"/><rect x="0" y="14" width="2" height="2" fill="#10c010"/><rect x="2" y="14" width="2" height="2" fill="#e01010"/><rect x="4" y="14" width="2" height="2" fill="#c01010"/><rect x="6" y="14" width="2" height="2" fill="#e01010"/><rect x="8" y="14" width="2" height="2" fill="#10c010"/><rect x="10" y="14" width="2" height="2" fill="#10c010"/><rect x="12" y="14" width="2" height="2" fill="#10c010"/><rect x="14" y="14" width="2" height="2" fill="#10c010"/><rect x="16" y="14" width="2" height="2" fill="#10c010"/><rect x="18" y="14" width="2" height="2" fill="#10c010"/><rect x="20" y="14" width="2" height="2" fill="#e01010"/><rect x="22" y="14" width="2" height="2" fill="#10c010"/><path d="M3,10 C7,7.5 12,9.5 16,8" stroke="#4a0a0a" stroke-width="1.2" fill="none"/></g></svg><svg style="left:29.6px;top:329px" width="34" height="37" viewBox="0 0 34 37"><path d="M7.1,30.2 C4,26 0.3,18 0.3,11 C0.3,4 6,0.5 12,0.5 C18,0.5 22,2.5 25,8 L31.8,18.7 L25.8,19.8 L25.8,27.4 L19.2,27.4 L18.7,35.1 Z" fill="#fff" stroke="#7c7c7c" stroke-width="1.7" stroke-linejoin="round"/><circle cx="6.5" cy="23" r="6.2" fill="#ff8a3a"/><circle cx="6.5" cy="23" r="3.4" fill="#ffd84a"/></svg><svg style="left:79px;top:329px" width="34" height="37" viewBox="0 0 34 37"><path d="M7.1,30.2 C4,26 0.3,18 0.3,11 C0.3,4 6,0.5 12,0.5 C18,0.5 22,2.5 25,8 L31.8,18.7 L25.8,19.8 L25.8,27.4 L19.2,27.4 L18.7,35.1 Z" fill="#fff" stroke="#7c7c7c" stroke-width="1.7" stroke-linejoin="round"/><path d="M4,17 H8 V13 H12 V17 H16 V21 H12 V25 H8 V21 H4 Z" fill="#3cc43c" stroke="#1c8a1c" stroke-width="1.2"/></svg><svg style="left:128.5px;top:329px" width="34" height="37" viewBox="0 0 34 37"><path d="M7.1,30.2 C4,26 0.3,18 0.3,11 C0.3,4 6,0.5 12,0.5 C18,0.5 22,2.5 25,8 L31.8,18.7 L25.8,19.8 L25.8,27.4 L19.2,27.4 L18.7,35.1 Z" fill="#fff" stroke="#7c7c7c" stroke-width="1.7" stroke-linejoin="round"/><path d="M1.5,14.5 L5,13 L8,17 L11.5,13.5 L14,16 L10.5,20 L13.5,24 L10,26 L7,22.5 L3.5,26 L1,23.5 L5,19.5 Z" fill="#ee2a10"/></svg><svg style="left:178px;top:329px" width="34" height="37" viewBox="0 0 34 37"><path d="M7.1,30.2 C4,26 0.3,18 0.3,11 C0.3,4 6,0.5 12,0.5 C18,0.5 22,2.5 25,8 L31.8,18.7 L25.8,19.8 L25.8,27.4 L19.2,27.4 L18.7,35.1 Z" fill="#fff" stroke="#a6a6a6" stroke-width="1.7" stroke-linejoin="round"/><rect x="1" y="13.5" width="14" height="14" fill="#bdbdbd" stroke="#8e8e8e" stroke-width="1.2"/><rect x="4" y="14" width="8" height="5" fill="#e8e8e8"/><rect x="4.5" y="22" width="7" height="5" fill="#8e8e8e"/></svg><svg style="left:239.8px;top:333.2px" width="30" height="28" viewBox="0 0 30 28"><defs><linearGradient id="ua" x1="0" y1="0" x2="1" y2="0"><stop offset="0" stop-color="#9a9a9a"/><stop offset="0.5" stop-color="#d6d6d6"/><stop offset="1" stop-color="#8a8a8a"/></linearGradient></defs><path d="M14.5,0.5 L29,14 L21,14 L21,27.5 L8,27.5 L8,14 L0,14 Z" fill="url(#ua)"/></svg><svg style="left:289px;top:333.2px" width="30" height="28" viewBox="0 0 30 28"><defs><linearGradient id="da" x1="0" y1="0" x2="1" y2="0"><stop offset="0" stop-color="#1e6ad8"/><stop offset="0.5" stop-color="#6ab8ff"/><stop offset="1" stop-color="#1a5fc8"/></linearGradient></defs><path d="M14.5,27.5 L29,14 L21,14 L21,0.5 L8,0.5 L8,14 L0,14 Z" fill="url(#da)"/></svg><svg style="left:337px;top:330.7px" width="33" height="32" viewBox="0 0 33 32"><path d="M20,14 V8 C20,3 23,1 26,1 C29,1 31.5,3 31.5,8 V14" fill="none" stroke="#909090" stroke-width="3"/><path d="M1,16 C1,13 6,12 12,12 C18,12 23,13 23,16 V28 C23,31 18,32 12,32 C6,32 1,31 1,28 Z" fill="#f4d810" stroke="#b89a00" stroke-width="1"/><ellipse cx="12" cy="16" rx="10.5" ry="3.2" fill="#fff27a"/></svg><svg style="left:31px;top:391px" width="31" height="30" viewBox="0 0 31 30"><path d="M1,1 H11 L14,4 V23 H1 Z" fill="#eef4ff" stroke="#5a7ac8" stroke-width="1.3"/><path d="M9,9 H20 L23,12 V29 H9 Z" fill="#f4f8ff" stroke="#5a7ac8" stroke-width="1.3"/><rect x="12" y="17" width="11" height="12" fill="#fff" stroke="#404040" stroke-width="1.3"/><path d="M12,19 L17,25 L29,8" fill="none" stroke="#1a4ccf" stroke-width="2.8"/></svg><svg style="left:80px;top:387px" width="31" height="34" viewBox="0 0 31 34"><rect x="1" y="5" width="22" height="25" rx="2" fill="#d4d4d4" stroke="#c0c0c0" stroke-width="1"/><path d="M7,6 L12,1 L17,6 Z" fill="#e8e8e8" stroke="#bdbdbd" stroke-width="1"/><path d="M13,14 H25 L29,18 V31 H13 Z" fill="#eeeeee" stroke="#c2c2c2" stroke-width="1"/><path d="M16,20 H25 M16,24 H25" stroke="#cccccc" stroke-width="1"/><path d="M21,27 L24,30 L29,24" stroke="#9a9a9a" stroke-width="2" fill="none"/></svg><svg style="left:130px;top:387px" width="33" height="37" viewBox="0 0 33 37"><rect x="1" y="5" width="22" height="25" rx="2" fill="#d4d4d4" stroke="#c0c0c0" stroke-width="1"/><path d="M7,6 L12,1 L17,6 Z" fill="#e8e8e8" stroke="#bdbdbd" stroke-width="1"/><path d="M11,12 H23 L27,16 V29 H11 Z M15,17 H27 L31,21 V35 H15 Z" fill="#eeeeee" stroke="#c2c2c2" stroke-width="1"/><path d="M16,20 H25 M16,24 H25" stroke="#cccccc" stroke-width="1"/><path d="M21,27 L24,30 L29,24" stroke="#9a9a9a" stroke-width="2" fill="none"/></svg><div class="r" style="left:457px;top:135px;width:681px;height:463px;background:#000"></div><div class="r" style="left:1140px;top:135px;width:682px;height:463px;background:#000"></div><div class="r" style="left:457px;top:599px;width:681px;height:461px;background:#000"></div><div class="r" style="left:1140px;top:599px;width:682px;height:461px;background:#000"></div><svg style="left:0;top:0" width="1" height="1"><defs>
<filter id="tex" x="0" y="0" width="100%" height="100%" color-interpolation-filters="sRGB"><feTurbulence type="fractalNoise" baseFrequency="0.22" numOctaves="2" seed="4" result="n"/>
<feColorMatrix in="n" type="matrix" values="0 0 0 0 1  0 0 0 0 1  0 0 0 0 1  2.2 0 0 0 -0.8" result="a"/>
<feComposite in="a" in2="SourceAlpha" operator="in"/></filter>
<filter id="texd" x="0" y="0" width="100%" height="100%" color-interpolation-filters="sRGB"><feTurbulence type="fractalNoise" baseFrequency="0.16" numOctaves="2" seed="9" result="n"/>
<feColorMatrix in="n" type="matrix" values="0 0 0 0 0  0 0 0 0 0  0 0 0 0 0  2.4 0 0 0 -0.9" result="a"/>
<feComposite in="a" in2="SourceAlpha" operator="in"/></filter>
<filter id="gyri" x="0" y="0" width="100%" height="100%" color-interpolation-filters="sRGB"><feTurbulence type="turbulence" baseFrequency="0.024 0.036" numOctaves="2" seed="3"/>
<feColorMatrix type="matrix" values="0 0 0 0 0.39  0 0 0 0 0.36  0 0 0 0 0.37  -5.5 0 0 0 1.5"/><feComposite in2="SourceAlpha" operator="in"/></filter>
<filter id="b1"><feGaussianBlur stdDeviation="1.2"/></filter>
<filter id="b2"><feGaussianBlur stdDeviation="2.5"/></filter>
<filter id="b4"><feGaussianBlur stdDeviation="4.5"/></filter>
</defs></svg><svg style="left:457px;top:135px" width="681" height="463" viewBox="457 135 681 463"><defs><clipPath id="c1"><rect x="457" y="135" width="681" height="463"/></clipPath></defs><g clip-path="url(#c1)"><defs><clipPath id="s1hc"><path d="M700.0,640.0 C649.6,631.8 701.0,607.3 697.9,591.0 C694.8,574.7 688.6,554.2 681.6,542.0 C674.6,529.8 662.7,528.8 655.7,518.0 C648.7,507.2 643.5,491.7 639.5,477.0 C635.5,462.3 632.9,443.8 631.4,430.0 C629.9,416.2 629.0,408.5 630.8,394.0 C632.6,379.5 636.4,358.0 642.0,343.0 C647.6,328.0 654.2,316.6 664.5,304.0 C674.8,291.4 688.3,277.4 703.7,267.6 C719.1,257.8 739.3,249.9 757.0,245.0 C774.7,240.1 791.8,238.0 810.0,238.0 C828.2,238.0 848.2,240.5 866.0,245.0 C883.8,249.5 902.2,257.0 916.7,265.0 C931.2,273.0 943.6,282.8 953.0,293.0 C962.4,303.2 968.0,314.5 972.8,326.5 C977.6,338.5 981.3,350.6 982.0,365.0 C982.7,379.4 974.0,401.7 977.0,413.0 C980.0,424.3 992.7,427.1 1000.0,433.0 C1007.3,438.9 1017.2,444.2 1021.0,448.5 C1024.8,452.8 1025.3,456.1 1023.0,459.0 C1020.7,461.9 1007.3,461.8 1007.0,466.0 C1006.7,470.2 1018.0,475.2 1021.0,484.0 C1024.0,492.8 1025.5,508.7 1024.7,519.0 C1023.9,529.3 1019.3,533.0 1016.0,546.0 C1012.7,559.0 1007.7,581.3 1005.0,597.0 C1002.3,612.7 1050.8,632.8 1000.0,640.0 C949.2,647.2 750.4,648.2 700.0,640.0 Z"/></clipPath></defs><path d="M700.0,640.0 C649.6,631.8 701.0,607.3 697.9,591.0 C694.8,574.7 688.6,554.2 681.6,542.0 C674.6,529.8 662.7,528.8 655.7,518.0 C648.7,507.2 643.5,491.7 639.5,477.0 C635.5,462.3 632.9,443.8 631.4,430.0 C629.9,416.2 629.0,408.5 630.8,394.0 C632.6,379.5 636.4,358.0 642.0,343.0 C647.6,328.0 654.2,316.6 664.5,304.0 C674.8,291.4 688.3,277.4 703.7,267.6 C719.1,257.8 739.3,249.9 757.0,245.0 C774.7,240.1 791.8,238.0 810.0,238.0 C828.2,238.0 848.2,240.5 866.0,245.0 C883.8,249.5 902.2,257.0 916.7,265.0 C931.2,273.0 943.6,282.8 953.0,293.0 C962.4,303.2 968.0,314.5 972.8,326.5 C977.6,338.5 981.3,350.6 982.0,365.0 C982.7,379.4 974.0,401.7 977.0,413.0 C980.0,424.3 992.7,427.1 1000.0,433.0 C1007.3,438.9 1017.2,444.2 1021.0,448.5 C1024.8,452.8 1025.3,456.1 1023.0,459.0 C1020.7,461.9 1007.3,461.8 1007.0,466.0 C1006.7,470.2 1018.0,475.2 1021.0,484.0 C1024.0,492.8 1025.5,508.7 1024.7,519.0 C1023.9,529.3 1019.3,533.0 1016.0,546.0 C1012.7,559.0 1007.7,581.3 1005.0,597.0 C1002.3,612.7 1050.8,632.8 1000.0,640.0 C949.2,647.2 750.4,648.2 700.0,640.0 Z" fill="#747474"/><g clip-path="url(#s1hc)"><path d="M700.0,640.0 C649.6,631.8 701.0,607.3 697.9,591.0 C694.8,574.7 688.6,554.2 681.6,542.0 C674.6,529.8 662.7,528.8 655.7,518.0 C648.7,507.2 643.5,491.7 639.5,477.0 C635.5,462.3 632.9,443.8 631.4,430.0 C629.9,416.2 629.0,408.5 630.8,394.0 C632.6,379.5 636.4,358.0 642.0,343.0 C647.6,328.0 654.2,316.6 664.5,304.0 C674.8,291.4 688.3,277.4 703.7,267.6 C719.1,257.8 739.3,249.9 757.0,245.0 C774.7,240.1 791.8,238.0 810.0,238.0 C828.2,238.0 848.2,240.5 866.0,245.0 C883.8,249.5 902.2,257.0 916.7,265.0 C931.2,273.0 943.6,282.8 953.0,293.0 C962.4,303.2 968.0,314.5 972.8,326.5 C977.6,338.5 981.3,350.6 982.0,365.0 C982.7,379.4 974.0,401.7 977.0,413.0 C980.0,424.3 992.7,427.1 1000.0,433.0 C1007.3,438.9 1017.2,444.2 1021.0,448.5 C1024.8,452.8 1025.3,456.1 1023.0,459.0 C1020.7,461.9 1007.3,461.8 1007.0,466.0 C1006.7,470.2 1018.0,475.2 1021.0,484.0 C1024.0,492.8 1025.5,508.7 1024.7,519.0 C1023.9,529.3 1019.3,533.0 1016.0,546.0 C1012.7,559.0 1007.7,581.3 1005.0,597.0 C1002.3,612.7 1050.8,632.8 1000.0,640.0 C949.2,647.2 750.4,648.2 700.0,640.0 Z" fill="none" stroke="#dadada" stroke-width="30"/><path d="M700.0,640.0 C649.6,631.8 701.0,607.3 697.9,591.0 C694.8,574.7 688.6,554.2 681.6,542.0 C674.6,529.8 662.7,528.8 655.7,518.0 C648.7,507.2 643.5,491.7 639.5,477.0 C635.5,462.3 632.9,443.8 631.4,430.0 C629.9,416.2 629.0,408.5 630.8,394.0 C632.6,379.5 636.4,358.0 642.0,343.0 C647.6,328.0 654.2,316.6 664.5,304.0 C674.8,291.4 688.3,277.4 703.7,267.6 C719.1,257.8 739.3,249.9 757.0,245.0 C774.7,240.1 791.8,238.0 810.0,238.0 C828.2,238.0 848.2,240.5 866.0,245.0 C883.8,249.5 902.2,257.0 916.7,265.0 C931.2,273.0 943.6,282.8 953.0,293.0 C962.4,303.2 968.0,314.5 972.8,326.5 C977.6,338.5 981.3,350.6 982.0,365.0 C982.7,379.4 974.0,401.7 977.0,413.0 C980.0,424.3 992.7,427.1 1000.0,433.0 C1007.3,438.9 1017.2,444.2 1021.0,448.5 C1024.8,452.8 1025.3,456.1 1023.0,459.0 C1020.7,461.9 1007.3,461.8 1007.0,466.0 C1006.7,470.2 1018.0,475.2 1021.0,484.0 C1024.0,492.8 1025.5,508.7 1024.7,519.0 C1023.9,529.3 1019.3,533.0 1016.0,546.0 C1012.7,559.0 1007.7,581.3 1005.0,597.0 C1002.3,612.7 1050.8,632.8 1000.0,640.0 C949.2,647.2 750.4,648.2 700.0,640.0 Z" fill="none" stroke="#3c3c3c" stroke-width="2.5" transform="translate(810,420) scale(0.965) translate(-810,-420)" opacity="0.8"/><path d="M700.0,640.0 C649.6,631.8 701.0,607.3 697.9,591.0 C694.8,574.7 688.6,554.2 681.6,542.0 C674.6,529.8 662.7,528.8 655.7,518.0 C648.7,507.2 643.5,491.7 639.5,477.0 C635.5,462.3 632.9,443.8 631.4,430.0 C629.9,416.2 629.0,408.5 630.8,394.0 C632.6,379.5 636.4,358.0 642.0,343.0 C647.6,328.0 654.2,316.6 664.5,304.0 C674.8,291.4 688.3,277.4 703.7,267.6 C719.1,257.8 739.3,249.9 757.0,245.0 C774.7,240.1 791.8,238.0 810.0,238.0 C828.2,238.0 848.2,240.5 866.0,245.0 C883.8,249.5 902.2,257.0 916.7,265.0 C931.2,273.0 943.6,282.8 953.0,293.0 C962.4,303.2 968.0,314.5 972.8,326.5 C977.6,338.5 981.3,350.6 982.0,365.0 C982.7,379.4 974.0,401.7 977.0,413.0 C980.0,424.3 992.7,427.1 1000.0,433.0 C1007.3,438.9 1017.2,444.2 1021.0,448.5 C1024.8,452.8 1025.3,456.1 1023.0,459.0 C1020.7,461.9 1007.3,461.8 1007.0,466.0 C1006.7,470.2 1018.0,475.2 1021.0,484.0 C1024.0,492.8 1025.5,508.7 1024.7,519.0 C1023.9,529.3 1019.3,533.0 1016.0,546.0 C1012.7,559.0 1007.7,581.3 1005.0,597.0 C1002.3,612.7 1050.8,632.8 1000.0,640.0 C949.2,647.2 750.4,648.2 700.0,640.0 Z" fill="#fff" filter="url(#tex)" opacity="0.42"/><path d="M700.0,640.0 C649.6,631.8 701.0,607.3 697.9,591.0 C694.8,574.7 688.6,554.2 681.6,542.0 C674.6,529.8 662.7,528.8 655.7,518.0 C648.7,507.2 643.5,491.7 639.5,477.0 C635.5,462.3 632.9,443.8 631.4,430.0 C629.9,416.2 629.0,408.5 630.8,394.0 C632.6,379.5 636.4,358.0 642.0,343.0 C647.6,328.0 654.2,316.6 664.5,304.0 C674.8,291.4 688.3,277.4 703.7,267.6 C719.1,257.8 739.3,249.9 757.0,245.0 C774.7,240.1 791.8,238.0 810.0,238.0 C828.2,238.0 848.2,240.5 866.0,245.0 C883.8,249.5 902.2,257.0 916.7,265.0 C931.2,273.0 943.6,282.8 953.0,293.0 C962.4,303.2 968.0,314.5 972.8,326.5 C977.6,338.5 981.3,350.6 982.0,365.0 C982.7,379.4 974.0,401.7 977.0,413.0 C980.0,424.3 992.7,427.1 1000.0,433.0 C1007.3,438.9 1017.2,444.2 1021.0,448.5 C1024.8,452.8 1025.3,456.1 1023.0,459.0 C1020.7,461.9 1007.3,461.8 1007.0,466.0 C1006.7,470.2 1018.0,475.2 1021.0,484.0 C1024.0,492.8 1025.5,508.7 1024.7,519.0 C1023.9,529.3 1019.3,533.0 1016.0,546.0 C1012.7,559.0 1007.7,581.3 1005.0,597.0 C1002.3,612.7 1050.8,632.8 1000.0,640.0 C949.2,647.2 750.4,648.2 700.0,640.0 Z" fill="#000" filter="url(#texd)" opacity="0.32"/><path d="M652.0,470.0 C642.8,455.8 645.7,437.5 645.0,420.0 C644.3,402.5 644.2,382.0 648.0,365.0 C651.8,348.0 658.3,331.2 668.0,318.0 C677.7,304.8 691.2,295.0 706.0,286.0 C720.8,277.0 739.3,268.8 757.0,264.0 C774.7,259.2 793.8,257.0 812.0,257.0 C830.2,257.0 849.3,259.7 866.0,264.0 C882.7,268.3 899.3,275.3 912.0,283.0 C924.7,290.7 934.3,300.2 942.0,310.0 C949.7,319.8 954.5,330.3 958.0,342.0 C961.5,353.7 963.5,370.3 963.0,380.0 C962.5,389.7 965.5,396.7 955.0,400.0 C944.5,403.3 917.5,399.7 900.0,400.0 C882.5,400.3 866.7,398.7 850.0,402.0 C833.3,405.3 818.3,408.7 800.0,420.0 C781.7,431.3 756.7,455.8 740.0,470.0 C723.3,484.2 714.7,505.0 700.0,505.0 C685.3,505.0 661.2,484.2 652.0,470.0 Z" fill="#2c2c2c"/><path d="M652.0,470.0 C642.8,455.8 645.7,437.5 645.0,420.0 C644.3,402.5 644.2,382.0 648.0,365.0 C651.8,348.0 658.3,331.2 668.0,318.0 C677.7,304.8 691.2,295.0 706.0,286.0 C720.8,277.0 739.3,268.8 757.0,264.0 C774.7,259.2 793.8,257.0 812.0,257.0 C830.2,257.0 849.3,259.7 866.0,264.0 C882.7,268.3 899.3,275.3 912.0,283.0 C924.7,290.7 934.3,300.2 942.0,310.0 C949.7,319.8 954.5,330.3 958.0,342.0 C961.5,353.7 963.5,370.3 963.0,380.0 C962.5,389.7 965.5,396.7 955.0,400.0 C944.5,403.3 917.5,399.7 900.0,400.0 C882.5,400.3 866.7,398.7 850.0,402.0 C833.3,405.3 818.3,408.7 800.0,420.0 C781.7,431.3 756.7,455.8 740.0,470.0 C723.3,484.2 714.7,505.0 700.0,505.0 C685.3,505.0 661.2,484.2 652.0,470.0 Z" fill="#555" transform="translate(805,360) scale(0.955) translate(-805,-360)"/><g filter="url(#b2)"><path d="M848,398 L955,398 L982,425 L992,487 L880,487 L850,440 Z" fill="#141414"/><ellipse cx="905" cy="450" rx="22" ry="6" fill="#8a8a8a"/><ellipse cx="945" cy="462" rx="18" ry="5" fill="#a0a0a0"/><ellipse cx="880" cy="425" rx="10" ry="8" fill="#5a5a5a"/><ellipse cx="930" cy="420" rx="14" ry="6" fill="#4a4a4a"/><path d="M868,478 C910,470 955,468 990,476" stroke="#b8b8b8" stroke-width="4" fill="none"/><path d="M880,492 C900,482 960,482 990,495 L992,597 L880,597 Z" fill="#8c8c8c"/><path d="M898,525 C925,508 955,502 982,505" stroke="#cfcfcf" stroke-width="3.5" fill="none"/><ellipse cx="940" cy="560" rx="30" ry="12" fill="#a6a6a6"/><ellipse cx="1003" cy="512" rx="12" ry="24" fill="#161616"/><path d="M972,398 C982,420 1000,440 1018,452" stroke="#ececec" stroke-width="7" fill="none"/><path d="M1006,470 C1016,490 1021,520 1013,560" stroke="#e4e4e4" stroke-width="6" fill="none"/><path d="M868,410 L872,600" stroke="#2a2a2a" stroke-width="7"/><path d="M842,420 C840,480 842,540 846,600" stroke="#c4c4c4" stroke-width="5" fill="none"/><path d="M796,495 L800,600 L838,600 L836,495 Z" fill="#707070"/><path d="M700,520 C730,505 770,505 790,520 L800,640 L700,640 Z" fill="#606060"/><path d="M690,525 C720,545 760,560 790,600" stroke="#a8a8a8" stroke-width="5" fill="none"/><path d="M806,510 L812,600 M824,505 L828,600" stroke="#3a3a3a" stroke-width="3"/></g><path d="M700.0,640.0 C649.6,631.8 701.0,607.3 697.9,591.0 C694.8,574.7 688.6,554.2 681.6,542.0 C674.6,529.8 662.7,528.8 655.7,518.0 C648.7,507.2 643.5,491.7 639.5,477.0 C635.5,462.3 632.9,443.8 631.4,430.0 C629.9,416.2 629.0,408.5 630.8,394.0 C632.6,379.5 636.4,358.0 642.0,343.0 C647.6,328.0 654.2,316.6 664.5,304.0 C674.8,291.4 688.3,277.4 703.7,267.6 C719.1,257.8 739.3,249.9 757.0,245.0 C774.7,240.1 791.8,238.0 810.0,238.0 C828.2,238.0 848.2,240.5 866.0,245.0 C883.8,249.5 902.2,257.0 916.7,265.0 C931.2,273.0 943.6,282.8 953.0,293.0 C962.4,303.2 968.0,314.5 972.8,326.5 C977.6,338.5 981.3,350.6 982.0,365.0 C982.7,379.4 974.0,401.7 977.0,413.0 C980.0,424.3 992.7,427.1 1000.0,433.0 C1007.3,438.9 1017.2,444.2 1021.0,448.5 C1024.8,452.8 1025.3,456.1 1023.0,459.0 C1020.7,461.9 1007.3,461.8 1007.0,466.0 C1006.7,470.2 1018.0,475.2 1021.0,484.0 C1024.0,492.8 1025.5,508.7 1024.7,519.0 C1023.9,529.3 1019.3,533.0 1016.0,546.0 C1012.7,559.0 1007.7,581.3 1005.0,597.0 C1002.3,612.7 1050.8,632.8 1000.0,640.0 C949.2,647.2 750.4,648.2 700.0,640.0 Z" fill="#000" filter="url(#texd)" opacity="0.3"/></g><path d="M667.0,416.0 C665.1,405.3 663.0,390.1 664.5,377.0 C666.0,363.9 669.6,349.9 675.7,337.7 C681.8,325.5 691.2,313.8 701.0,304.0 C710.8,294.2 721.0,284.6 734.5,279.0 C748.0,273.4 764.8,271.6 782.0,270.4 C799.2,269.2 821.7,269.9 838.0,271.8 C854.3,273.7 867.3,276.8 880.0,281.7 C892.7,286.6 904.7,293.5 914.0,301.0 C923.3,308.5 930.9,317.6 936.0,326.5 C941.1,335.4 944.2,345.6 944.7,354.5 C945.2,363.4 945.1,374.2 939.0,379.8 C932.9,385.4 917.8,384.8 908.0,388.0 C898.2,391.2 890.7,397.2 880.0,399.0 C869.3,400.8 855.0,399.9 843.8,399.0 C832.6,398.1 823.8,395.6 813.0,393.8 C802.2,392.0 788.3,388.0 779.0,388.0 C769.7,388.0 764.9,390.0 757.0,393.8 C749.1,397.6 740.1,403.1 731.7,410.6 C723.3,418.1 713.5,431.7 706.5,438.6 C699.5,445.5 694.8,451.5 689.7,452.0 C684.6,452.5 679.5,447.4 675.7,441.4 C671.9,435.4 668.9,426.7 667.0,416.0 Z" fill="#bb9559"/><path d="M667.0,416.0 C665.1,405.3 663.0,390.1 664.5,377.0 C666.0,363.9 669.6,349.9 675.7,337.7 C681.8,325.5 691.2,313.8 701.0,304.0 C710.8,294.2 721.0,284.6 734.5,279.0 C748.0,273.4 764.8,271.6 782.0,270.4 C799.2,269.2 821.7,269.9 838.0,271.8 C854.3,273.7 867.3,276.8 880.0,281.7 C892.7,286.6 904.7,293.5 914.0,301.0 C923.3,308.5 930.9,317.6 936.0,326.5 C941.1,335.4 944.2,345.6 944.7,354.5 C945.2,363.4 945.1,374.2 939.0,379.8 C932.9,385.4 917.8,384.8 908.0,388.0 C898.2,391.2 890.7,397.2 880.0,399.0 C869.3,400.8 855.0,399.9 843.8,399.0 C832.6,398.1 823.8,395.6 813.0,393.8 C802.2,392.0 788.3,388.0 779.0,388.0 C769.7,388.0 764.9,390.0 757.0,393.8 C749.1,397.6 740.1,403.1 731.7,410.6 C723.3,418.1 713.5,431.7 706.5,438.6 C699.5,445.5 694.8,451.5 689.7,452.0 C684.6,452.5 679.5,447.4 675.7,441.4 C671.9,435.4 668.9,426.7 667.0,416.0 Z" fill="#000" filter="url(#gyri)"/><path d="M690,395 C720,380 740,395 760,388 M700,330 C730,320 745,345 770,330 M760,300 C790,310 810,300 840,312 M850,300 C870,320 900,315 925,330 M880,345 C900,350 920,365 938,360 M680,420 C700,412 720,420 735,410" stroke="#6e6266" stroke-width="3.5" fill="none"/><path d="M700.0,455.0 C702.8,446.3 710.5,434.8 718.0,428.0 C725.5,421.2 736.0,416.7 745.0,414.0 C754.0,411.3 765.5,408.0 772.0,412.0 C778.5,416.0 781.5,427.5 784.0,438.0 C786.5,448.5 787.5,464.3 787.0,475.0 C786.5,485.7 786.8,495.8 781.0,502.0 C775.2,508.2 762.5,511.8 752.0,512.0 C741.5,512.2 726.5,508.3 718.0,503.0 C709.5,497.7 704.0,488.0 701.0,480.0 C698.0,472.0 697.2,463.7 700.0,455.0 Z" fill="#8e8e8e"/><g filter="url(#b1)"><g stroke="#6c6c6c" stroke-width="2.2" fill="none"><path d="M768,462 C752,440 740,430 728,424 M768,462 C748,452 730,448 714,446 M768,466 C745,470 725,475 708,478 M768,470 C752,488 738,498 725,503 M770,462 C768,445 765,430 760,418"/></g><g stroke="#b4b4b4" stroke-width="2" fill="none"><path d="M772,462 C760,448 748,440 738,432 M772,464 C756,458 740,458 722,460 M772,468 C755,478 740,486 730,492"/></g></g><path d="M650,430 C670,470 700,500 766,515" stroke="#1e1e1e" stroke-width="5" fill="none" filter="url(#b1)"/><path d="M777.0,380.0 C783.3,375.8 808.8,373.0 816.0,380.0 C823.2,387.0 820.2,407.7 820.0,422.0 C819.8,436.3 817.8,454.3 815.0,466.0 C812.2,477.7 807.7,487.7 803.0,492.0 C798.3,496.3 790.8,500.0 787.0,492.0 C783.2,484.0 781.5,458.5 780.0,444.0 C778.5,429.5 778.5,415.7 778.0,405.0 C777.5,394.3 770.7,384.2 777.0,380.0 Z" fill="#bb9559"/><path d="M816,384 L852,393 L864,408 L840,418 L822,412 Z" fill="#2e2e2e" filter="url(#b1)"/><path d="M757.0,371.3 C758.4,367.1 763.5,361.3 768.2,357.3 C772.9,353.3 777.5,349.8 785.0,347.5 C792.5,345.2 803.7,343.9 813.0,343.5 C822.3,343.1 833.5,343.8 841.0,345.0 C848.5,346.2 853.9,347.7 857.8,350.7 C861.7,353.7 863.9,358.8 864.5,363.0 C865.1,367.2 864.7,373.4 861.7,376.1 C858.7,378.8 851.9,379.5 846.6,379.0 C841.3,378.5 836.3,375.1 829.8,373.3 C823.3,371.5 814.9,368.4 807.4,368.1 C799.9,367.8 791.1,369.1 785.0,371.3 C778.9,373.5 775.2,379.3 771.0,381.2 C766.8,383.1 762.1,384.2 759.8,382.6 C757.5,381.0 755.6,375.5 757.0,371.3 Z" fill="#c4c01c"/><path d="M703,300 C750,272 820,262 905,284" stroke="#c8c21a" stroke-width="2" fill="none" opacity="0.7"/></g></svg><svg style="left:1140px;top:135px" width="682" height="463" viewBox="1140 135 682 463"><defs><clipPath id="c2"><rect x="1140" y="135" width="682" height="463"/></clipPath></defs><g clip-path="url(#c2)"><defs><clipPath id="chc"><path d="M1331,600 L1331,512 C1331,470 1333,440 1336,420 C1338,370 1345,320 1372,290 C1405,258 1445,246 1484,246 C1523,246 1563,258 1596,290 C1623,320 1630,370 1632,420 C1635,440 1637,470 1637,512 L1637,600 Z"/></clipPath></defs><path d="M1331,600 L1331,512 C1331,470 1333,440 1336,420 C1338,370 1345,320 1372,290 C1405,258 1445,246 1484,246 C1523,246 1563,258 1596,290 C1623,320 1630,370 1632,420 C1635,440 1637,470 1637,512 L1637,600 Z" fill="#7a7a7a"/><g clip-path="url(#chc)"><rect x="1331" y="450" width="306" height="150" fill="#969696"/><path d="M1331,600 L1331,512 C1331,470 1333,440 1336,420 C1338,370 1345,320 1372,290 C1405,258 1445,246 1484,246 C1523,246 1563,258 1596,290 C1623,320 1630,370 1632,420 C1635,440 1637,470 1637,512 L1637,600 Z" fill="none" stroke="#cccccc" stroke-width="26"/><path d="M1354,440 C1350,400 1352,360 1372,318 C1400,280 1440,264 1484,264 C1528,264 1568,280 1596,318 C1616,360 1618,400 1614,440 C1604,462 1560,466 1484,466 C1408,466 1364,462 1354,440 Z" fill="#2a2a2a"/><path d="M1354,440 C1350,400 1352,360 1372,318 C1400,280 1440,264 1484,264 C1528,264 1568,280 1596,318 C1616,360 1618,400 1614,440 C1604,462 1560,466 1484,466 C1408,466 1364,462 1354,440 Z" fill="#585858" transform="translate(1484,400) scale(0.96) translate(-1484,-400)"/><g filter="url(#b2)"><path d="M1380,455 C1420,470 1550,470 1590,455 L1596,480 L1372,480 Z" fill="#2a2a2a"/><rect x="1474" y="462" width="22" height="48" fill="#1a1a1a"/><path d="M1362,480 L1372,590 M1608,480 L1598,590" stroke="#2a2a2a" stroke-width="7"/><ellipse cx="1430" cy="540" rx="34" ry="60" fill="#b0b0b0"/><ellipse cx="1540" cy="540" rx="34" ry="60" fill="#b0b0b0"/><ellipse cx="1380" cy="560" rx="14" ry="40" fill="#c0c0c0"/><ellipse cx="1590" cy="560" rx="14" ry="40" fill="#c0c0c0"/><rect x="1476" y="530" width="16" height="40" fill="#333"/></g><path d="M1331,600 L1331,512 C1331,470 1333,440 1336,420 C1338,370 1345,320 1372,290 C1405,258 1445,246 1484,246 C1523,246 1563,258 1596,290 C1623,320 1630,370 1632,420 C1635,440 1637,470 1637,512 L1637,600 Z" fill="#fff" filter="url(#tex)" opacity="0.42"/><path d="M1331,600 L1331,512 C1331,470 1333,440 1336,420 C1338,370 1345,320 1372,290 C1405,258 1445,246 1484,246 C1523,246 1563,258 1596,290 C1623,320 1630,370 1632,420 C1635,440 1637,470 1637,512 L1637,600 Z" fill="#000" filter="url(#texd)" opacity="0.32"/></g><path d="M1482.0,270.7 C1501.2,270.7 1523.7,274.3 1540.0,280.0 C1556.3,285.7 1571.3,293.3 1580.0,305.0 C1588.7,316.7 1589.7,332.5 1592.0,350.0 C1594.3,367.5 1594.7,394.0 1594.0,410.0 C1593.3,426.0 1597.0,439.0 1588.0,446.0 C1579.0,453.0 1554.7,451.3 1540.0,452.0 C1525.3,452.7 1511.0,451.0 1500.0,450.0 C1489.0,449.0 1484.0,446.0 1474.0,446.0 C1464.0,446.0 1455.7,450.0 1440.0,450.0 C1424.3,450.0 1391.0,452.7 1380.0,446.0 C1369.0,439.3 1374.7,426.0 1374.0,410.0 C1373.3,394.0 1373.7,367.5 1376.0,350.0 C1378.3,332.5 1379.8,316.7 1388.0,305.0 C1396.2,293.3 1409.3,285.7 1425.0,280.0 C1440.7,274.3 1462.8,270.7 1482.0,270.7 Z" fill="#bb9559"/><path d="M1482.0,270.7 C1501.2,270.7 1523.7,274.3 1540.0,280.0 C1556.3,285.7 1571.3,293.3 1580.0,305.0 C1588.7,316.7 1589.7,332.5 1592.0,350.0 C1594.3,367.5 1594.7,394.0 1594.0,410.0 C1593.3,426.0 1597.0,439.0 1588.0,446.0 C1579.0,453.0 1554.7,451.3 1540.0,452.0 C1525.3,452.7 1511.0,451.0 1500.0,450.0 C1489.0,449.0 1484.0,446.0 1474.0,446.0 C1464.0,446.0 1455.7,450.0 1440.0,450.0 C1424.3,450.0 1391.0,452.7 1380.0,446.0 C1369.0,439.3 1374.7,426.0 1374.0,410.0 C1373.3,394.0 1373.7,367.5 1376.0,350.0 C1378.3,332.5 1379.8,316.7 1388.0,305.0 C1396.2,293.3 1409.3,285.7 1425.0,280.0 C1440.7,274.3 1462.8,270.7 1482.0,270.7 Z" fill="#000" filter="url(#gyri)"/><path d="M1481,272 L1481,345" stroke="#4e4e4e" stroke-width="4"/><path d="M1477,377 L1485,377 L1487,405 L1492,428 L1470,428 L1475,405 Z" fill="#3e3e3e" filter="url(#b1)"/><path d="M1450.7,342.0 C1450.9,341.1 1464.3,344.6 1466.0,345.0 C1467.7,345.4 1478.0,348.4 1480.0,348.0 C1482.0,347.6 1497.7,338.8 1500.0,338.0 C1502.3,337.2 1517.8,333.5 1519.0,334.0 C1520.2,334.5 1520.8,344.1 1520.0,346.0 C1519.2,347.9 1507.8,364.2 1506.0,366.0 C1504.2,367.8 1491.9,375.3 1490.0,376.0 C1488.1,376.7 1474.6,379.4 1473.0,378.5 C1471.4,377.6 1463.3,362.1 1462.0,360.0 C1460.7,357.9 1450.5,342.9 1450.7,342.0 Z" fill="#c4c01c"/></g></svg><svg style="left:457px;top:599px" width="681" height="461" viewBox="457 599 681 461"><defs><clipPath id="c3"><rect x="457" y="599" width="681" height="461"/></clipPath></defs><g clip-path="url(#c3)"><defs><clipPath id="ahc"><path d="M797,651 C845,651 890,668 915,700 C940,735 947,780 947,830 C947,930 880,994 797,994 C714,994 652,930 652,830 C652,780 659,735 684,700 C709,668 749,651 797,651 Z"/></clipPath></defs><path d="M797,651 C845,651 890,668 915,700 C940,735 947,780 947,830 C947,930 880,994 797,994 C714,994 652,930 652,830 C652,780 659,735 684,700 C709,668 749,651 797,651 Z" fill="#7e7e7e"/><g clip-path="url(#ahc)"><path d="M797,651 C845,651 890,668 915,700 C940,735 947,780 947,830 C947,930 880,994 797,994 C714,994 652,930 652,830 C652,780 659,735 684,700 C709,668 749,651 797,651 Z" fill="none" stroke="#d0d0d0" stroke-width="24"/><ellipse cx="798" cy="838" rx="128" ry="150" fill="#2e2e2e"/><ellipse cx="798" cy="838" rx="122" ry="144" fill="#575757"/><g filter="url(#b1)"><path d="M700,700 C720,690 760,690 790,705 L790,735 C760,725 720,725 700,735 Z" fill="#9a9a9a"/><path d="M806,705 C836,690 876,690 896,700 L896,735 C876,725 836,725 806,735 Z" fill="#9a9a9a"/><rect x="780" y="655" width="36" height="70" fill="#262626"/><ellipse cx="715" cy="712" rx="18" ry="12" fill="#2a2a2a"/><ellipse cx="882" cy="712" rx="18" ry="12" fill="#2a2a2a"/></g><g><circle cx="741" cy="676" r="25" fill="#d4d4d4"/><circle cx="741" cy="677" r="17" fill="#3c3c3c"/><circle cx="741" cy="681" r="11" fill="#555"/><circle cx="857" cy="676" r="25" fill="#d4d4d4"/><circle cx="857" cy="677" r="17" fill="#3c3c3c"/><circle cx="857" cy="681" r="11" fill="#555"/></g><path d="M797,651 C845,651 890,668 915,700 C940,735 947,780 947,830 C947,930 880,994 797,994 C714,994 652,930 652,830 C652,780 659,735 684,700 C709,668 749,651 797,651 Z" fill="#fff" filter="url(#tex)" opacity="0.42"/><path d="M797,651 C845,651 890,668 915,700 C940,735 947,780 947,830 C947,930 880,994 797,994 C714,994 652,930 652,830 C652,780 659,735 684,700 C709,668 749,651 797,651 Z" fill="#000" filter="url(#texd)" opacity="0.32"/></g><path d="M681,860 C674,790 690,745 738,722 C763,712 782,716 798,728 C815,716 835,712 860,722 C908,745 924,790 918,860 C914,930 872,962 800,962 C728,962 686,930 681,860 Z" fill="#bb9559"/><path d="M681,860 C674,790 690,745 738,722 C763,712 782,716 798,728 C815,716 835,712 860,722 C908,745 924,790 918,860 C914,930 872,962 800,962 C728,962 686,930 681,860 Z" fill="#000" filter="url(#gyri)"/><path d="M740,730 C770,760 785,790 798,800 C812,790 828,760 858,730 L858,770 C835,790 815,810 798,815 C782,810 762,790 740,770 Z" fill="#6a6a6a" opacity="0.6" filter="url(#b2)"/><path d="M798,728 L798,842 M799,905 L799,962" stroke="#4a4a4a" stroke-width="4"/><path d="M772,850 C785,844 812,844 826,850 L814,880 L808,915 L790,915 L784,880 Z" fill="#383838" filter="url(#b1)"/><path d="M740,852 C760,846 790,846 792,858 C790,872 780,870 772,875 C770,890 752,894 742,888 Z" fill="#c4c01c"/><path d="M804,848 C818,850 836,850 850,852 L848,858 C835,856 818,854 804,852 Z" fill="#c4c01c"/><path d="M828,856 C850,846 868,850 866,872 C867,892 860,908 843,907 C828,902 824,880 828,856 Z" fill="#c4c01c"/><path d="M770,825 C782,818 790,808 795,792 M828,825 C816,818 808,808 802,792" stroke="#c4c01c" stroke-width="3.5" fill="none" opacity="0.85"/></g></svg><svg style="left:1140px;top:599px" width="682" height="461" viewBox="1140 599 682 461"><defs><clipPath id="c4"><rect x="1140" y="599" width="682" height="461"/></clipPath></defs><g clip-path="url(#c4)"><g transform="translate(2074.1,559.1) scale(-0.745,0.745)"><defs><clipPath id="s4hc"><path d="M700.0,640.0 C649.6,631.8 701.0,607.3 697.9,591.0 C694.8,574.7 688.6,554.2 681.6,542.0 C674.6,529.8 662.7,528.8 655.7,518.0 C648.7,507.2 643.5,491.7 639.5,477.0 C635.5,462.3 632.9,443.8 631.4,430.0 C629.9,416.2 629.0,408.5 630.8,394.0 C632.6,379.5 636.4,358.0 642.0,343.0 C647.6,328.0 654.2,316.6 664.5,304.0 C674.8,291.4 688.3,277.4 703.7,267.6 C719.1,257.8 739.3,249.9 757.0,245.0 C774.7,240.1 791.8,238.0 810.0,238.0 C828.2,238.0 848.2,240.5 866.0,245.0 C883.8,249.5 902.2,257.0 916.7,265.0 C931.2,273.0 943.6,282.8 953.0,293.0 C962.4,303.2 968.0,314.5 972.8,326.5 C977.6,338.5 981.3,350.6 982.0,365.0 C982.7,379.4 974.0,401.7 977.0,413.0 C980.0,424.3 992.7,427.1 1000.0,433.0 C1007.3,438.9 1017.2,444.2 1021.0,448.5 C1024.8,452.8 1025.3,456.1 1023.0,459.0 C1020.7,461.9 1007.3,461.8 1007.0,466.0 C1006.7,470.2 1018.0,475.2 1021.0,484.0 C1024.0,492.8 1025.5,508.7 1024.7,519.0 C1023.9,529.3 1019.3,533.0 1016.0,546.0 C1012.7,559.0 1007.7,581.3 1005.0,597.0 C1002.3,612.7 1050.8,632.8 1000.0,640.0 C949.2,647.2 750.4,648.2 700.0,640.0 Z"/></clipPath></defs><path d="M700.0,640.0 C649.6,631.8 701.0,607.3 697.9,591.0 C694.8,574.7 688.6,554.2 681.6,542.0 C674.6,529.8 662.7,528.8 655.7,518.0 C648.7,507.2 643.5,491.7 639.5,477.0 C635.5,462.3 632.9,443.8 631.4,430.0 C629.9,416.2 629.0,408.5 630.8,394.0 C632.6,379.5 636.4,358.0 642.0,343.0 C647.6,328.0 654.2,316.6 664.5,304.0 C674.8,291.4 688.3,277.4 703.7,267.6 C719.1,257.8 739.3,249.9 757.0,245.0 C774.7,240.1 791.8,238.0 810.0,238.0 C828.2,238.0 848.2,240.5 866.0,245.0 C883.8,249.5 902.2,257.0 916.7,265.0 C931.2,273.0 943.6,282.8 953.0,293.0 C962.4,303.2 968.0,314.5 972.8,326.5 C977.6,338.5 981.3,350.6 982.0,365.0 C982.7,379.4 974.0,401.7 977.0,413.0 C980.0,424.3 992.7,427.1 1000.0,433.0 C1007.3,438.9 1017.2,444.2 1021.0,448.5 C1024.8,452.8 1025.3,456.1 1023.0,459.0 C1020.7,461.9 1007.3,461.8 1007.0,466.0 C1006.7,470.2 1018.0,475.2 1021.0,484.0 C1024.0,492.8 1025.5,508.7 1024.7,519.0 C1023.9,529.3 1019.3,533.0 1016.0,546.0 C1012.7,559.0 1007.7,581.3 1005.0,597.0 C1002.3,612.7 1050.8,632.8 1000.0,640.0 C949.2,647.2 750.4,648.2 700.0,640.0 Z" fill="#747474"/><g clip-path="url(#s4hc)"><path d="M700.0,640.0 C649.6,631.8 701.0,607.3 697.9,591.0 C694.8,574.7 688.6,554.2 681.6,542.0 C674.6,529.8 662.7,528.8 655.7,518.0 C648.7,507.2 643.5,491.7 639.5,477.0 C635.5,462.3 632.9,443.8 631.4,430.0 C629.9,416.2 629.0,408.5 630.8,394.0 C632.6,379.5 636.4,358.0 642.0,343.0 C647.6,328.0 654.2,316.6 664.5,304.0 C674.8,291.4 688.3,277.4 703.7,267.6 C719.1,257.8 739.3,249.9 757.0,245.0 C774.7,240.1 791.8,238.0 810.0,238.0 C828.2,238.0 848.2,240.5 866.0,245.0 C883.8,249.5 902.2,257.0 916.7,265.0 C931.2,273.0 943.6,282.8 953.0,293.0 C962.4,303.2 968.0,314.5 972.8,326.5 C977.6,338.5 981.3,350.6 982.0,365.0 C982.7,379.4 974.0,401.7 977.0,413.0 C980.0,424.3 992.7,427.1 1000.0,433.0 C1007.3,438.9 1017.2,444.2 1021.0,448.5 C1024.8,452.8 1025.3,456.1 1023.0,459.0 C1020.7,461.9 1007.3,461.8 1007.0,466.0 C1006.7,470.2 1018.0,475.2 1021.0,484.0 C1024.0,492.8 1025.5,508.7 1024.7,519.0 C1023.9,529.3 1019.3,533.0 1016.0,546.0 C1012.7,559.0 1007.7,581.3 1005.0,597.0 C1002.3,612.7 1050.8,632.8 1000.0,640.0 C949.2,647.2 750.4,648.2 700.0,640.0 Z" fill="none" stroke="#dadada" stroke-width="30"/><path d="M700.0,640.0 C649.6,631.8 701.0,607.3 697.9,591.0 C694.8,574.7 688.6,554.2 681.6,542.0 C674.6,529.8 662.7,528.8 655.7,518.0 C648.7,507.2 643.5,491.7 639.5,477.0 C635.5,462.3 632.9,443.8 631.4,430.0 C629.9,416.2 629.0,408.5 630.8,394.0 C632.6,379.5 636.4,358.0 642.0,343.0 C647.6,328.0 654.2,316.6 664.5,304.0 C674.8,291.4 688.3,277.4 703.7,267.6 C719.1,257.8 739.3,249.9 757.0,245.0 C774.7,240.1 791.8,238.0 810.0,238.0 C828.2,238.0 848.2,240.5 866.0,245.0 C883.8,249.5 902.2,257.0 916.7,265.0 C931.2,273.0 943.6,282.8 953.0,293.0 C962.4,303.2 968.0,314.5 972.8,326.5 C977.6,338.5 981.3,350.6 982.0,365.0 C982.7,379.4 974.0,401.7 977.0,413.0 C980.0,424.3 992.7,427.1 1000.0,433.0 C1007.3,438.9 1017.2,444.2 1021.0,448.5 C1024.8,452.8 1025.3,456.1 1023.0,459.0 C1020.7,461.9 1007.3,461.8 1007.0,466.0 C1006.7,470.2 1018.0,475.2 1021.0,484.0 C1024.0,492.8 1025.5,508.7 1024.7,519.0 C1023.9,529.3 1019.3,533.0 1016.0,546.0 C1012.7,559.0 1007.7,581.3 1005.0,597.0 C1002.3,612.7 1050.8,632.8 1000.0,640.0 C949.2,647.2 750.4,648.2 700.0,640.0 Z" fill="none" stroke="#3c3c3c" stroke-width="2.5" transform="translate(810,420) scale(0.965) translate(-810,-420)" opacity="0.8"/><path d="M700.0,640.0 C649.6,631.8 701.0,607.3 697.9,591.0 C694.8,574.7 688.6,554.2 681.6,542.0 C674.6,529.8 662.7,528.8 655.7,518.0 C648.7,507.2 643.5,491.7 639.5,477.0 C635.5,462.3 632.9,443.8 631.4,430.0 C629.9,416.2 629.0,408.5 630.8,394.0 C632.6,379.5 636.4,358.0 642.0,343.0 C647.6,328.0 654.2,316.6 664.5,304.0 C674.8,291.4 688.3,277.4 703.7,267.6 C719.1,257.8 739.3,249.9 757.0,245.0 C774.7,240.1 791.8,238.0 810.0,238.0 C828.2,238.0 848.2,240.5 866.0,245.0 C883.8,249.5 902.2,257.0 916.7,265.0 C931.2,273.0 943.6,282.8 953.0,293.0 C962.4,303.2 968.0,314.5 972.8,326.5 C977.6,338.5 981.3,350.6 982.0,365.0 C982.7,379.4 974.0,401.7 977.0,413.0 C980.0,424.3 992.7,427.1 1000.0,433.0 C1007.3,438.9 1017.2,444.2 1021.0,448.5 C1024.8,452.8 1025.3,456.1 1023.0,459.0 C1020.7,461.9 1007.3,461.8 1007.0,466.0 C1006.7,470.2 1018.0,475.2 1021.0,484.0 C1024.0,492.8 1025.5,508.7 1024.7,519.0 C1023.9,529.3 1019.3,533.0 1016.0,546.0 C1012.7,559.0 1007.7,581.3 1005.0,597.0 C1002.3,612.7 1050.8,632.8 1000.0,640.0 C949.2,647.2 750.4,648.2 700.0,640.0 Z" fill="#fff" filter="url(#tex)" opacity="0.42"/><path d="M700.0,640.0 C649.6,631.8 701.0,607.3 697.9,591.0 C694.8,574.7 688.6,554.2 681.6,542.0 C674.6,529.8 662.7,528.8 655.7,518.0 C648.7,507.2 643.5,491.7 639.5,477.0 C635.5,462.3 632.9,443.8 631.4,430.0 C629.9,416.2 629.0,408.5 630.8,394.0 C632.6,379.5 636.4,358.0 642.0,343.0 C647.6,328.0 654.2,316.6 664.5,304.0 C674.8,291.4 688.3,277.4 703.7,267.6 C719.1,257.8 739.3,249.9 757.0,245.0 C774.7,240.1 791.8,238.0 810.0,238.0 C828.2,238.0 848.2,240.5 866.0,245.0 C883.8,249.5 902.2,257.0 916.7,265.0 C931.2,273.0 943.6,282.8 953.0,293.0 C962.4,303.2 968.0,314.5 972.8,326.5 C977.6,338.5 981.3,350.6 982.0,365.0 C982.7,379.4 974.0,401.7 977.0,413.0 C980.0,424.3 992.7,427.1 1000.0,433.0 C1007.3,438.9 1017.2,444.2 1021.0,448.5 C1024.8,452.8 1025.3,456.1 1023.0,459.0 C1020.7,461.9 1007.3,461.8 1007.0,466.0 C1006.7,470.2 1018.0,475.2 1021.0,484.0 C1024.0,492.8 1025.5,508.7 1024.7,519.0 C1023.9,529.3 1019.3,533.0 1016.0,546.0 C1012.7,559.0 1007.7,581.3 1005.0,597.0 C1002.3,612.7 1050.8,632.8 1000.0,640.0 C949.2,647.2 750.4,648.2 700.0,640.0 Z" fill="#000" filter="url(#texd)" opacity="0.32"/><path d="M652.0,470.0 C642.8,455.8 645.7,437.5 645.0,420.0 C644.3,402.5 644.2,382.0 648.0,365.0 C651.8,348.0 658.3,331.2 668.0,318.0 C677.7,304.8 691.2,295.0 706.0,286.0 C720.8,277.0 739.3,268.8 757.0,264.0 C774.7,259.2 793.8,257.0 812.0,257.0 C830.2,257.0 849.3,259.7 866.0,264.0 C882.7,268.3 899.3,275.3 912.0,283.0 C924.7,290.7 934.3,300.2 942.0,310.0 C949.7,319.8 954.5,330.3 958.0,342.0 C961.5,353.7 963.5,370.3 963.0,380.0 C962.5,389.7 965.5,396.7 955.0,400.0 C944.5,403.3 917.5,399.7 900.0,400.0 C882.5,400.3 866.7,398.7 850.0,402.0 C833.3,405.3 818.3,408.7 800.0,420.0 C781.7,431.3 756.7,455.8 740.0,470.0 C723.3,484.2 714.7,505.0 700.0,505.0 C685.3,505.0 661.2,484.2 652.0,470.0 Z" fill="#2c2c2c"/><path d="M652.0,470.0 C642.8,455.8 645.7,437.5 645.0,420.0 C644.3,402.5 644.2,382.0 648.0,365.0 C651.8,348.0 658.3,331.2 668.0,318.0 C677.7,304.8 691.2,295.0 706.0,286.0 C720.8,277.0 739.3,268.8 757.0,264.0 C774.7,259.2 793.8,257.0 812.0,257.0 C830.2,257.0 849.3,259.7 866.0,264.0 C882.7,268.3 899.3,275.3 912.0,283.0 C924.7,290.7 934.3,300.2 942.0,310.0 C949.7,319.8 954.5,330.3 958.0,342.0 C961.5,353.7 963.5,370.3 963.0,380.0 C962.5,389.7 965.5,396.7 955.0,400.0 C944.5,403.3 917.5,399.7 900.0,400.0 C882.5,400.3 866.7,398.7 850.0,402.0 C833.3,405.3 818.3,408.7 800.0,420.0 C781.7,431.3 756.7,455.8 740.0,470.0 C723.3,484.2 714.7,505.0 700.0,505.0 C685.3,505.0 661.2,484.2 652.0,470.0 Z" fill="#555" transform="translate(805,360) scale(0.955) translate(-805,-360)"/><g filter="url(#b2)"><path d="M848,398 L955,398 L982,425 L992,487 L880,487 L850,440 Z" fill="#141414"/><ellipse cx="905" cy="450" rx="22" ry="6" fill="#8a8a8a"/><ellipse cx="945" cy="462" rx="18" ry="5" fill="#a0a0a0"/><ellipse cx="880" cy="425" rx="10" ry="8" fill="#5a5a5a"/><ellipse cx="930" cy="420" rx="14" ry="6" fill="#4a4a4a"/><path d="M868,478 C910,470 955,468 990,476" stroke="#b8b8b8" stroke-width="4" fill="none"/><path d="M880,492 C900,482 960,482 990,495 L992,597 L880,597 Z" fill="#8c8c8c"/><path d="M898,525 C925,508 955,502 982,505" stroke="#cfcfcf" stroke-width="3.5" fill="none"/><ellipse cx="940" cy="560" rx="30" ry="12" fill="#a6a6a6"/><ellipse cx="1003" cy="512" rx="12" ry="24" fill="#161616"/><path d="M972,398 C982,420 1000,440 1018,452" stroke="#ececec" stroke-width="7" fill="none"/><path d="M1006,470 C1016,490 1021,520 1013,560" stroke="#e4e4e4" stroke-width="6" fill="none"/><path d="M868,410 L872,600" stroke="#2a2a2a" stroke-width="7"/><path d="M842,420 C840,480 842,540 846,600" stroke="#c4c4c4" stroke-width="5" fill="none"/><path d="M796,495 L800,600 L838,600 L836,495 Z" fill="#707070"/><path d="M700,520 C730,505 770,505 790,520 L800,640 L700,640 Z" fill="#606060"/><path d="M690,525 C720,545 760,560 790,600" stroke="#a8a8a8" stroke-width="5" fill="none"/><path d="M806,510 L812,600 M824,505 L828,600" stroke="#3a3a3a" stroke-width="3"/></g><path d="M700.0,640.0 C649.6,631.8 701.0,607.3 697.9,591.0 C694.8,574.7 688.6,554.2 681.6,542.0 C674.6,529.8 662.7,528.8 655.7,518.0 C648.7,507.2 643.5,491.7 639.5,477.0 C635.5,462.3 632.9,443.8 631.4,430.0 C629.9,416.2 629.0,408.5 630.8,394.0 C632.6,379.5 636.4,358.0 642.0,343.0 C647.6,328.0 654.2,316.6 664.5,304.0 C674.8,291.4 688.3,277.4 703.7,267.6 C719.1,257.8 739.3,249.9 757.0,245.0 C774.7,240.1 791.8,238.0 810.0,238.0 C828.2,238.0 848.2,240.5 866.0,245.0 C883.8,249.5 902.2,257.0 916.7,265.0 C931.2,273.0 943.6,282.8 953.0,293.0 C962.4,303.2 968.0,314.5 972.8,326.5 C977.6,338.5 981.3,350.6 982.0,365.0 C982.7,379.4 974.0,401.7 977.0,413.0 C980.0,424.3 992.7,427.1 1000.0,433.0 C1007.3,438.9 1017.2,444.2 1021.0,448.5 C1024.8,452.8 1025.3,456.1 1023.0,459.0 C1020.7,461.9 1007.3,461.8 1007.0,466.0 C1006.7,470.2 1018.0,475.2 1021.0,484.0 C1024.0,492.8 1025.5,508.7 1024.7,519.0 C1023.9,529.3 1019.3,533.0 1016.0,546.0 C1012.7,559.0 1007.7,581.3 1005.0,597.0 C1002.3,612.7 1050.8,632.8 1000.0,640.0 C949.2,647.2 750.4,648.2 700.0,640.0 Z" fill="#000" filter="url(#texd)" opacity="0.3"/></g><path d="M667.0,416.0 C665.1,405.3 663.0,390.1 664.5,377.0 C666.0,363.9 669.6,349.9 675.7,337.7 C681.8,325.5 691.2,313.8 701.0,304.0 C710.8,294.2 721.0,284.6 734.5,279.0 C748.0,273.4 764.8,271.6 782.0,270.4 C799.2,269.2 821.7,269.9 838.0,271.8 C854.3,273.7 867.3,276.8 880.0,281.7 C892.7,286.6 904.7,293.5 914.0,301.0 C923.3,308.5 930.9,317.6 936.0,326.5 C941.1,335.4 944.2,345.6 944.7,354.5 C945.2,363.4 945.1,374.2 939.0,379.8 C932.9,385.4 917.8,384.8 908.0,388.0 C898.2,391.2 890.7,397.2 880.0,399.0 C869.3,400.8 855.0,399.9 843.8,399.0 C832.6,398.1 823.8,395.6 813.0,393.8 C802.2,392.0 788.3,388.0 779.0,388.0 C769.7,388.0 764.9,390.0 757.0,393.8 C749.1,397.6 740.1,403.1 731.7,410.6 C723.3,418.1 713.5,431.7 706.5,438.6 C699.5,445.5 694.8,451.5 689.7,452.0 C684.6,452.5 679.5,447.4 675.7,441.4 C671.9,435.4 668.9,426.7 667.0,416.0 Z" fill="#bb9559"/><path d="M667.0,416.0 C665.1,405.3 663.0,390.1 664.5,377.0 C666.0,363.9 669.6,349.9 675.7,337.7 C681.8,325.5 691.2,313.8 701.0,304.0 C710.8,294.2 721.0,284.6 734.5,279.0 C748.0,273.4 764.8,271.6 782.0,270.4 C799.2,269.2 821.7,269.9 838.0,271.8 C854.3,273.7 867.3,276.8 880.0,281.7 C892.7,286.6 904.7,293.5 914.0,301.0 C923.3,308.5 930.9,317.6 936.0,326.5 C941.1,335.4 944.2,345.6 944.7,354.5 C945.2,363.4 945.1,374.2 939.0,379.8 C932.9,385.4 917.8,384.8 908.0,388.0 C898.2,391.2 890.7,397.2 880.0,399.0 C869.3,400.8 855.0,399.9 843.8,399.0 C832.6,398.1 823.8,395.6 813.0,393.8 C802.2,392.0 788.3,388.0 779.0,388.0 C769.7,388.0 764.9,390.0 757.0,393.8 C749.1,397.6 740.1,403.1 731.7,410.6 C723.3,418.1 713.5,431.7 706.5,438.6 C699.5,445.5 694.8,451.5 689.7,452.0 C684.6,452.5 679.5,447.4 675.7,441.4 C671.9,435.4 668.9,426.7 667.0,416.0 Z" fill="#000" filter="url(#gyri)"/><path d="M690,395 C720,380 740,395 760,388 M700,330 C730,320 745,345 770,330 M760,300 C790,310 810,300 840,312 M850,300 C870,320 900,315 925,330 M880,345 C900,350 920,365 938,360 M680,420 C700,412 720,420 735,410" stroke="#6e6266" stroke-width="3.5" fill="none"/><path d="M700.0,455.0 C702.8,446.3 710.5,434.8 718.0,428.0 C725.5,421.2 736.0,416.7 745.0,414.0 C754.0,411.3 765.5,408.0 772.0,412.0 C778.5,416.0 781.5,427.5 784.0,438.0 C786.5,448.5 787.5,464.3 787.0,475.0 C786.5,485.7 786.8,495.8 781.0,502.0 C775.2,508.2 762.5,511.8 752.0,512.0 C741.5,512.2 726.5,508.3 718.0,503.0 C709.5,497.7 704.0,488.0 701.0,480.0 C698.0,472.0 697.2,463.7 700.0,455.0 Z" fill="#8e8e8e"/><g filter="url(#b1)"><g stroke="#6c6c6c" stroke-width="2.2" fill="none"><path d="M768,462 C752,440 740,430 728,424 M768,462 C748,452 730,448 714,446 M768,466 C745,470 725,475 708,478 M768,470 C752,488 738,498 725,503 M770,462 C768,445 765,430 760,418"/></g><g stroke="#b4b4b4" stroke-width="2" fill="none"><path d="M772,462 C760,448 748,440 738,432 M772,464 C756,458 740,458 722,460 M772,468 C755,478 740,486 730,492"/></g></g><path d="M650,430 C670,470 700,500 766,515" stroke="#1e1e1e" stroke-width="5" fill="none" filter="url(#b1)"/><path d="M777.0,380.0 C783.3,375.8 808.8,373.0 816.0,380.0 C823.2,387.0 820.2,407.7 820.0,422.0 C819.8,436.3 817.8,454.3 815.0,466.0 C812.2,477.7 807.7,487.7 803.0,492.0 C798.3,496.3 790.8,500.0 787.0,492.0 C783.2,484.0 781.5,458.5 780.0,444.0 C778.5,429.5 778.5,415.7 778.0,405.0 C777.5,394.3 770.7,384.2 777.0,380.0 Z" fill="#bb9559"/><path d="M816,384 L852,393 L864,408 L840,418 L822,412 Z" fill="#2e2e2e" filter="url(#b1)"/><path d="M757.0,371.3 C758.4,367.1 763.5,361.3 768.2,357.3 C772.9,353.3 777.5,349.8 785.0,347.5 C792.5,345.2 803.7,343.9 813.0,343.5 C822.3,343.1 833.5,343.8 841.0,345.0 C848.5,346.2 853.9,347.7 857.8,350.7 C861.7,353.7 863.9,358.8 864.5,363.0 C865.1,367.2 864.7,373.4 861.7,376.1 C858.7,378.8 851.9,379.5 846.6,379.0 C841.3,378.5 836.3,375.1 829.8,373.3 C823.3,371.5 814.9,368.4 807.4,368.1 C799.9,367.8 791.1,369.1 785.0,371.3 C778.9,373.5 775.2,379.3 771.0,381.2 C766.8,383.1 762.1,384.2 759.8,382.6 C757.5,381.0 755.6,375.5 757.0,371.3 Z" fill="#c4c01c"/><path d="M703,300 C750,272 820,262 905,284" stroke="#c8c21a" stroke-width="2" fill="none" opacity="0.7"/></g><rect x="1302.8" y="659.9" width="348" height="368.7" fill="none" stroke="#e81010" stroke-width="1.6"/><path d="M1434,617 L1434,1059" stroke="#10d010" stroke-width="2.2"/><path d="M1434,625 L1448,687" stroke="#10d010" stroke-width="1.5"/><path d="M1437,1059 L1442,1028" stroke="#10d010" stroke-width="1.5"/><path d="M1257.5,855.9 L1696,855.9" stroke="#1414e6" stroke-width="2"/><path d="M1268,854 L1290,852 L1302,851" stroke="#1414e6" stroke-width="1.5" fill="none"/><path d="M1650,851 L1670,853 L1690,854" stroke="#1414e6" stroke-width="1.5" fill="none"/></g></svg><div class="r" style="left:1139px;top:135px;width:1px;height:925px;background:#c4c4c4"></div><div class="r" style="left:457px;top:598px;width:1365px;height:1px;background:#e4e4e4"></div><div class="r" style="left:1137px;top:135px;width:1.5px;height:463px;background:#ff0000"></div><div class="r" style="left:847.5px;top:135px;width:1.3px;height:14px;background:#ff1a1a"></div><div class="r" style="left:847.5px;top:584px;width:1.3px;height:14px;background:#ff1a1a"></div><div class="r" style="left:457px;top:395.5px;width:14px;height:1.3px;background:#ff1a1a"></div><div class="r" style="left:1124px;top:395.5px;width:14px;height:1.3px;background:#ff1a1a"></div><div class="r" style="left:840px;top:395.5px;width:16px;height:1.3px;background:#ff1a1a"></div><div class="r" style="left:847.5px;top:388px;width:1.3px;height:16px;background:#ff1a1a"></div><div class="r" style="left:1467.5px;top:135px;width:1.3px;height:14px;background:#ff1a1a"></div><div class="r" style="left:1467.5px;top:584px;width:1.3px;height:14px;background:#ff1a1a"></div><div class="r" style="left:1140px;top:395.5px;width:14px;height:1.3px;background:#ff1a1a"></div><div class="r" style="left:1808px;top:395.5px;width:14px;height:1.3px;background:#ff1a1a"></div><div class="r" style="left:1460px;top:395.5px;width:16px;height:1.3px;background:#ff1a1a"></div><div class="r" style="left:1467.5px;top:388px;width:1.3px;height:16px;background:#ff1a1a"></div><div class="r" style="left:785.5px;top:599px;width:1.3px;height:14px;background:#ff1a1a"></div><div class="r" style="left:785.5px;top:1045px;width:1.3px;height:14px;background:#ff1a1a"></div><div class="r" style="left:457px;top:777.5px;width:14px;height:1.3px;background:#ff1a1a"></div><div class="r" style="left:1124px;top:777.5px;width:14px;height:1.3px;background:#ff1a1a"></div><div class="r" style="left:778px;top:777.5px;width:16px;height:1.3px;background:#ff1a1a"></div><div class="r" style="left:785.5px;top:770px;width:1.3px;height:16px;background:#ff1a1a"></div><div class="r" style="left:486.59999999999997px;top:577.2px;width:1.9px;height:12.8px;background:#e6e6e6"></div><div class="r" style="left:485.2px;top:578.2px;width:2px;height:1.5px;background:#bdbdbd"></div><div class="r" style="left:490.2px;top:573.5px;width:20px;height:2px;background:#e8e8e8"></div><div class="r" style="left:490.2px;top:573.5px;width:1.6px;height:4.5px;background:#e8e8e8"></div><div class="r" style="left:494.59999999999997px;top:573.5px;width:1.6px;height:4.5px;background:#e8e8e8"></div><div class="r" style="left:499.0px;top:573.5px;width:1.6px;height:4.5px;background:#e8e8e8"></div><div class="r" style="left:503.4px;top:573.5px;width:1.6px;height:4.5px;background:#e8e8e8"></div><div class="r" style="left:507.8px;top:573.5px;width:1.6px;height:4.5px;background:#e8e8e8"></div><div class="r" style="left:1169.2px;top:577.2px;width:1.9px;height:12.8px;background:#e6e6e6"></div><div class="r" style="left:1167.8px;top:578.2px;width:2px;height:1.5px;background:#bdbdbd"></div><div class="r" style="left:1172.8px;top:573.5px;width:20px;height:2px;background:#e8e8e8"></div><div class="r" style="left:1172.8px;top:573.5px;width:1.6px;height:4.5px;background:#e8e8e8"></div><div class="r" style="left:1177.2px;top:573.5px;width:1.6px;height:4.5px;background:#e8e8e8"></div><div class="r" style="left:1181.6px;top:573.5px;width:1.6px;height:4.5px;background:#e8e8e8"></div><div class="r" style="left:1186.0px;top:573.5px;width:1.6px;height:4.5px;background:#e8e8e8"></div><div class="r" style="left:1190.3999999999999px;top:573.5px;width:1.6px;height:4.5px;background:#e8e8e8"></div><div class="r" style="left:486.59999999999997px;top:1038.7px;width:1.9px;height:12.8px;background:#e6e6e6"></div><div class="r" style="left:485.2px;top:1039.7px;width:2px;height:1.5px;background:#bdbdbd"></div><div class="r" style="left:490.2px;top:1035.0px;width:20px;height:2px;background:#e8e8e8"></div><div class="r" style="left:490.2px;top:1035.0px;width:1.6px;height:4.5px;background:#e8e8e8"></div><div class="r" style="left:494.59999999999997px;top:1035.0px;width:1.6px;height:4.5px;background:#e8e8e8"></div><div class="r" style="left:499.0px;top:1035.0px;width:1.6px;height:4.5px;background:#e8e8e8"></div><div class="r" style="left:503.4px;top:1035.0px;width:1.6px;height:4.5px;background:#e8e8e8"></div><div class="r" style="left:507.8px;top:1035.0px;width:1.6px;height:4.5px;background:#e8e8e8"></div></div></div>
<div class="t" style="left:45.21px;top:15.50px;font-size:16.6px;font-weight:normal;color:#1a1a1a;transform:scaleX(1.0886);">FreeView (/home/zz/freesurfer_subjects/daiquanqi/mri/wm.mgz)</div>
<div class="t" style="left:15.97px;top:52.70px;font-size:18.2px;font-weight:normal;color:#202020;transform:scaleX(1.0287);">File</div>
<div class="t" style="left:68.89px;top:52.70px;font-size:18.2px;font-weight:normal;color:#202020;transform:scaleX(1.1061);">Edit</div>
<div class="t" style="left:126.30px;top:52.70px;font-size:18.2px;font-weight:normal;color:#202020;transform:scaleX(1.0436);">View</div>
<div class="t" style="left:189.98px;top:52.70px;font-size:18.2px;font-weight:normal;color:#202020;transform:scaleX(1.1161);">Layer</div>
<div class="t" style="left:263.00px;top:52.70px;font-size:18.2px;font-weight:normal;color:#202020;transform:scaleX(1.1187);">Action</div>
<div class="t" style="left:340.60px;top:52.70px;font-size:18.2px;font-weight:normal;color:#202020;transform:scaleX(1.1071);">Tools</div>
<div class="t" style="left:409.42px;top:52.70px;font-size:18.2px;font-weight:normal;color:#202020;transform:scaleX(1.0802);">Help</div>
<div class="t" style="left:1781.19px;top:93.10px;font-size:27px;font-weight:bold;color:#111;transform:scaleX(1.0111);">R</div>
<div class="t" style="left:45.10px;top:147.10px;font-size:18.5px;font-weight:normal;color:#1e1e1e;transform:scaleX(1.0763);">Volumes</div>
<div class="t" style="left:106.37px;top:169.70px;font-size:18.5px;font-weight:bold;color:#ffffff;transform:scaleX(1.0736);">wm</div>
<div class="t" style="left:104.40px;top:192.30px;font-size:18.5px;font-weight:normal;color:#1e1e1e;">T1</div>
<div class="t" style="left:104.80px;top:214.70px;font-size:18.5px;font-weight:normal;color:#1e1e1e;transform:scaleX(1.1012);">aparc.DKTatlas+aseg</div>
<div class="t" style="left:104.40px;top:237.40px;font-size:18.5px;font-weight:normal;color:#1e1e1e;">T1</div>
<div class="t" style="left:16.12px;top:453.40px;font-size:18.5px;font-weight:normal;color:#1e1e1e;transform:scaleX(1.0758);">File name</div>
<div class="t" style="left:130.30px;top:453.90px;font-size:18.5px;font-weight:normal;color:#1e1e1e;transform:scaleX(1.0982);">er_subjects/daiquanqi/mri/wm.mgz</div>
<div class="t" style="left:15.38px;top:497.00px;font-size:18.5px;font-weight:normal;color:#1e1e1e;transform:scaleX(1.0171);">Mask</div>
<div class="t" style="left:135.24px;top:497.00px;font-size:18.5px;font-weight:normal;color:#1e1e1e;transform:scaleX(1.0597);">None</div>
<div class="t" style="left:16.40px;top:541.20px;font-size:18.5px;font-weight:normal;color:#1e1e1e;transform:scaleX(1.0746);">Opacity</div>
<div class="t" style="left:370.00px;top:541.60px;font-size:18.5px;font-weight:normal;color:#1e1e1e;transform:scaleX(1.0191);">0.62</div>
<div class="t" style="left:158.20px;top:583.90px;font-size:18.5px;font-weight:normal;color:#1e1e1e;transform:scaleX(1.0783);">Smooth display</div>
<div class="t" style="left:16.40px;top:625.80px;font-size:18.5px;font-weight:normal;color:#1e1e1e;transform:scaleX(1.0770);">Color map</div>
<div class="t" style="left:135.20px;top:625.90px;font-size:18.5px;font-weight:normal;color:#1e1e1e;transform:scaleX(1.0992);">Heat</div>
<div class="t" style="left:15.34px;top:669.50px;font-size:18.5px;font-weight:normal;color:#1e1e1e;transform:scaleX(1.0624);">Min</div>
<div class="t" style="left:342.00px;top:669.00px;font-size:18.5px;font-weight:normal;color:#1e1e1e;transform:scaleX(1.0825);">87.84</div>
<div class="t" style="left:15.34px;top:712.80px;font-size:18.5px;font-weight:normal;color:#b4b4b4;transform:scaleX(1.0624);">Mid</div>
<div class="t" style="left:342.00px;top:712.80px;font-size:18.5px;font-weight:normal;color:#b4b4b4;transform:scaleX(1.0825);">69.29</div>
<div class="t" style="left:15.38px;top:757.00px;font-size:18.5px;font-weight:normal;color:#1e1e1e;transform:scaleX(1.0202);">Max</div>
<div class="t" style="left:340.88px;top:757.00px;font-size:18.5px;font-weight:normal;color:#1e1e1e;transform:scaleX(1.1213);">124.73</div>
<div class="t" style="left:16.40px;top:799.90px;font-size:18.5px;font-weight:normal;color:#1e1e1e;transform:scaleX(1.0844);">Offset</div>
<div class="t" style="left:342.00px;top:800.00px;font-size:18.5px;font-weight:normal;color:#1e1e1e;transform:scaleX(1.0200);">0</div>
<div class="t" style="left:156.70px;top:842.80px;font-size:18.5px;font-weight:normal;color:#1e1e1e;transform:scaleX(1.1012);">Use percentile</div>
<div class="t" style="left:157.80px;top:882.50px;font-size:18.5px;font-weight:normal;color:#1e1e1e;transform:scaleX(1.0940);">Truncate</div>
<div class="t" style="left:285.45px;top:882.50px;font-size:18.5px;font-weight:normal;color:#1e1e1e;transform:scaleX(1.1478);">Invert</div>
<div class="t" style="left:158.00px;top:922.80px;font-size:18.5px;font-weight:normal;color:#1e1e1e;transform:scaleX(1.0740);">Autoset Mid</div>
<div class="t" style="left:312.60px;top:922.80px;font-size:18.5px;font-weight:normal;color:#1e1e1e;transform:scaleX(1.0751);">Set Mid to Min</div>
<div class="t" style="left:158.00px;top:963.20px;font-size:18.5px;font-weight:normal;color:#1e1e1e;transform:scaleX(1.0858);">Clear higher values</div>
<div class="t" style="left:162.22px;top:1006.00px;font-size:18.5px;font-weight:normal;color:#1e1e1e;transform:scaleX(1.0766);">Reset</div>
<div class="t" style="left:15.61px;top:1049.20px;font-size:18.5px;font-weight:normal;color:#1e1e1e;transform:scaleX(1.0938);">Label value</div>
<div class="t" style="left:133.22px;top:1049.20px;font-size:18.5px;font-weight:normal;color:#1e1e1e;transform:scaleX(0.9778);">1</div>
<div class="t" style="left:16.70px;top:1093.20px;font-size:18.5px;font-weight:normal;color:#1e1e1e;transform:scaleX(1.1109);">Show intensity projection map</div>
<div class="t" style="left:306.76px;top:1093.20px;font-size:18.5px;font-weight:normal;color:#1e1e1e;transform:scaleX(1.0364);">None</div>
<div class="t" style="left:45.00px;top:1134.80px;font-size:18.5px;font-weight:normal;color:#1e1e1e;transform:scaleX(1.1115);">Show label outline only (Ctrl+L)</div>
<div class="t" style="left:45.00px;top:1174.80px;font-size:18.5px;font-weight:normal;color:#1e1e1e;transform:scaleX(1.0790);">Show as isosurface in 3D view</div>
<div class="t" style="left:45.00px;top:1215.30px;font-size:18.5px;font-weight:normal;color:#1e1e1e;transform:scaleX(1.0919);">Show in Info panel</div>
<div class="t" style="left:462.85px;top:1100.20px;font-size:18.5px;font-weight:normal;color:#1e1e1e;transform:scaleX(0.9529);">RAS</div>
<div class="t" style="left:613.30px;top:1100.20px;font-size:18.5px;font-weight:normal;color:#1e1e1e;transform:scaleX(1.1106);">6.10, 51.38, -1.44</div>
<div class="t" style="left:463.80px;top:1122.65px;font-size:18.5px;font-weight:normal;color:#1e1e1e;transform:scaleX(1.0816);">TkReg... (wm)</div>
<div class="t" style="left:613.30px;top:1122.65px;font-size:18.5px;font-weight:normal;color:#1e1e1e;transform:scaleX(1.1131);">6.23, 22.30, 6.03</div>
<div class="t" style="left:462.71px;top:1145.10px;font-size:18.5px;font-weight:normal;color:#1e1e1e;transform:scaleX(1.0871);">MNI305 (wm)</div>
<div class="t" style="left:613.30px;top:1145.10px;font-size:18.5px;font-weight:normal;color:#1e1e1e;transform:scaleX(1.1106);">7.74, 6.17, -14.56</div>
<div class="t" style="left:464.92px;top:1167.55px;font-size:18.5px;font-weight:normal;color:#1e1e1e;transform:scaleX(1.1211);">wm</div>
<div class="t" style="left:613.30px;top:1167.55px;font-size:18.5px;font-weight:normal;color:#1e1e1e;transform:scaleX(1.1131);">0</div>
<div class="t" style="left:732.37px;top:1167.55px;font-size:18.5px;font-weight:normal;color:#1e1e1e;transform:scaleX(1.1342);">[122, 122, 150]</div>
<div class="t" style="left:463.80px;top:1190.00px;font-size:18.5px;font-weight:normal;color:#1e1e1e;transform:scaleX(1.0397);">T1</div>
<div class="t" style="left:613.30px;top:1190.00px;font-size:18.5px;font-weight:normal;color:#1e1e1e;transform:scaleX(1.1131);">69</div>
<div class="t" style="left:732.37px;top:1190.00px;font-size:18.5px;font-weight:normal;color:#1e1e1e;transform:scaleX(1.1342);">[122, 122, 150]</div>
<div class="t" style="left:463.80px;top:1212.45px;font-size:18.5px;font-weight:normal;color:#1e1e1e;transform:scaleX(1.1183);">aparc...+aseg</div>
<div class="t" style="left:613.30px;top:1212.45px;font-size:18.5px;font-weight:normal;color:#1e1e1e;transform:scaleX(1.1131);">2014</div>
<div class="t" style="left:732.37px;top:1212.45px;font-size:18.5px;font-weight:normal;color:#1e1e1e;transform:scaleX(1.1342);">[122, 143, 156]</div>
<div class="t" style="left:884.10px;top:1212.45px;font-size:18.5px;font-weight:normal;color:#1e1e1e;transform:scaleX(1.1370);">ctx-rh-medialorbitofrontal</div>
<div class="t" style="left:463.80px;top:1234.90px;font-size:18.5px;font-weight:normal;color:#1e1e1e;transform:scaleX(1.0397);">T1</div>
<div class="t" style="left:613.30px;top:1234.90px;font-size:18.5px;font-weight:normal;color:#1e1e1e;transform:scaleX(1.1131);">56</div>
<div class="t" style="left:732.37px;top:1234.90px;font-size:18.5px;font-weight:normal;color:#1e1e1e;transform:scaleX(1.1342);">[122, 143, 156]</div>
<div class="t" style="left:462.30px;top:1074.50px;font-size:18.5px;font-weight:normal;color:#1e1e1e;transform:scaleX(1.0659);">Cursor</div>
<div class="t" style="left:1146.85px;top:1100.20px;font-size:18.5px;font-weight:normal;color:#1e1e1e;transform:scaleX(0.9529);">RAS</div>
<div class="t" style="left:1297.90px;top:1100.20px;font-size:18.5px;font-weight:normal;color:#1e1e1e;transform:scaleX(1.1228);">6.10, 118.31, 48.59</div>
<div class="t" style="left:1147.80px;top:1122.65px;font-size:18.5px;font-weight:normal;color:#1e1e1e;transform:scaleX(1.0816);">TkReg... (wm)</div>
<div class="t" style="left:1297.90px;top:1122.65px;font-size:18.5px;font-weight:normal;color:#1e1e1e;transform:scaleX(1.1131);">6.23, 89.23, 56.06</div>
<div class="t" style="left:1146.71px;top:1145.10px;font-size:18.5px;font-weight:normal;color:#1e1e1e;transform:scaleX(1.0871);">MNI305 (wm)</div>
<div class="t" style="left:1297.90px;top:1145.10px;font-size:18.5px;font-weight:normal;color:#1e1e1e;transform:scaleX(1.1131);">6.82, 91.54, 17.68</div>
<div class="t" style="left:1148.92px;top:1167.55px;font-size:18.5px;font-weight:normal;color:#1e1e1e;transform:scaleX(1.1211);">wm</div>
<div class="t" style="left:1297.90px;top:1167.55px;font-size:18.5px;font-weight:normal;color:#1e1e1e;transform:scaleX(1.1131);">0</div>
<div class="t" style="left:1416.76px;top:1167.55px;font-size:18.5px;font-weight:normal;color:#1e1e1e;transform:scaleX(1.1361);">[122, 72, 217]</div>
<div class="t" style="left:1147.80px;top:1190.00px;font-size:18.5px;font-weight:normal;color:#1e1e1e;transform:scaleX(1.0397);">T1</div>
<div class="t" style="left:1297.90px;top:1190.00px;font-size:18.5px;font-weight:normal;color:#1e1e1e;transform:scaleX(1.1131);">0</div>
<div class="t" style="left:1416.76px;top:1190.00px;font-size:18.5px;font-weight:normal;color:#1e1e1e;transform:scaleX(1.1361);">[122, 72, 217]</div>
<div class="t" style="left:1147.80px;top:1212.45px;font-size:18.5px;font-weight:normal;color:#1e1e1e;transform:scaleX(1.1183);">aparc...+aseg</div>
<div class="t" style="left:1297.90px;top:1212.45px;font-size:18.5px;font-weight:normal;color:#1e1e1e;transform:scaleX(1.1131);">0</div>
<div class="t" style="left:1416.76px;top:1212.45px;font-size:18.5px;font-weight:normal;color:#1e1e1e;transform:scaleX(1.1361);">[122, 93, 223]</div>
<div class="t" style="left:1147.80px;top:1234.90px;font-size:18.5px;font-weight:normal;color:#1e1e1e;transform:scaleX(1.0397);">T1</div>
<div class="t" style="left:1297.90px;top:1234.90px;font-size:18.5px;font-weight:normal;color:#1e1e1e;transform:scaleX(1.1131);">0</div>
<div class="t" style="left:1416.76px;top:1234.90px;font-size:18.5px;font-weight:normal;color:#1e1e1e;transform:scaleX(1.1361);">[122, 93, 223]</div>
<div class="t" style="left:1146.05px;top:1074.50px;font-size:18.5px;font-weight:normal;color:#1e1e1e;transform:scaleX(1.0518);">Mouse</div>
<div class="t" style="left:764.20px;top:137.70px;font-size:19px;font-weight:normal;color:#e2e2e2;transform:scaleX(0.9073);">S 142.82</div>
<div class="t" style="left:1099.93px;top:137.70px;font-size:19px;font-weight:normal;color:#e2e2e2;transform:scaleX(0.9657);">122</div>
<div class="t" style="left:464.86px;top:355.10px;font-size:19px;font-weight:normal;color:#e2e2e2;transform:scaleX(0.9378);">P 165.74</div>
<div class="t" style="left:1056.00px;top:355.10px;font-size:19px;font-weight:normal;color:#e2e2e2;">A 211.61</div>
<div class="t" style="left:761.93px;top:573.00px;font-size:19px;font-weight:normal;color:#e2e2e2;transform:scaleX(1.0655);">I 113.18</div>
<div class="t" style="left:1079.08px;top:573.00px;font-size:19px;font-weight:normal;color:#e2e2e2;transform:scaleX(0.9189);">R 6.10</div>
<div class="t" style="left:1447.00px;top:137.70px;font-size:19px;font-weight:normal;color:#e2e2e2;transform:scaleX(0.9139);">S 142.82</div>
<div class="t" style="left:1782.04px;top:137.70px;font-size:19px;font-weight:normal;color:#e2e2e2;transform:scaleX(0.9624);">150</div>
<div class="t" style="left:1147.06px;top:355.10px;font-size:19px;font-weight:normal;color:#e2e2e2;transform:scaleX(0.9398);">R 189.36</div>
<div class="t" style="left:1744.07px;top:355.10px;font-size:19px;font-weight:normal;color:#e2e2e2;transform:scaleX(0.9255);">L 187.99</div>
<div class="t" style="left:1445.95px;top:573.00px;font-size:19px;font-weight:normal;color:#e2e2e2;transform:scaleX(1.0503);">I 113.18</div>
<div class="t" style="left:1750.00px;top:573.00px;font-size:19px;font-weight:normal;color:#e2e2e2;transform:scaleX(0.9549);">A 51.38</div>
<div class="t" style="left:761.00px;top:601.00px;font-size:19px;font-weight:normal;color:#e2e2e2;transform:scaleX(0.9802);">A 150.93</div>
<div class="t" style="left:1099.93px;top:601.00px;font-size:19px;font-weight:normal;color:#e2e2e2;transform:scaleX(0.9657);">122</div>
<div class="t" style="left:464.87px;top:818.00px;font-size:19px;font-weight:normal;color:#e2e2e2;transform:scaleX(0.9292);">R 189.98</div>
<div class="t" style="left:1060.05px;top:818.00px;font-size:19px;font-weight:normal;color:#e2e2e2;transform:scaleX(0.9531);">L 188.60</div>
<div class="t" style="left:761.05px;top:1035.00px;font-size:19px;font-weight:normal;color:#e2e2e2;transform:scaleX(0.9530);">P 105.07</div>
<div class="t" style="left:1079.96px;top:1035.00px;font-size:19px;font-weight:normal;color:#e2e2e2;transform:scaleX(1.0432);">I 1.44</div>
<div class="t" style="left:494.80px;top:574.00px;font-size:19px;font-weight:normal;color:#e2e2e2;transform:scaleX(1.0531);">cm</div>
<div class="t" style="left:1177.40px;top:574.00px;font-size:19px;font-weight:normal;color:#e2e2e2;transform:scaleX(1.0531);">cm</div>
<div class="t" style="left:494.80px;top:1035.50px;font-size:19px;font-weight:normal;color:#e2e2e2;transform:scaleX(1.0531);">cm</div>
</body></html>
